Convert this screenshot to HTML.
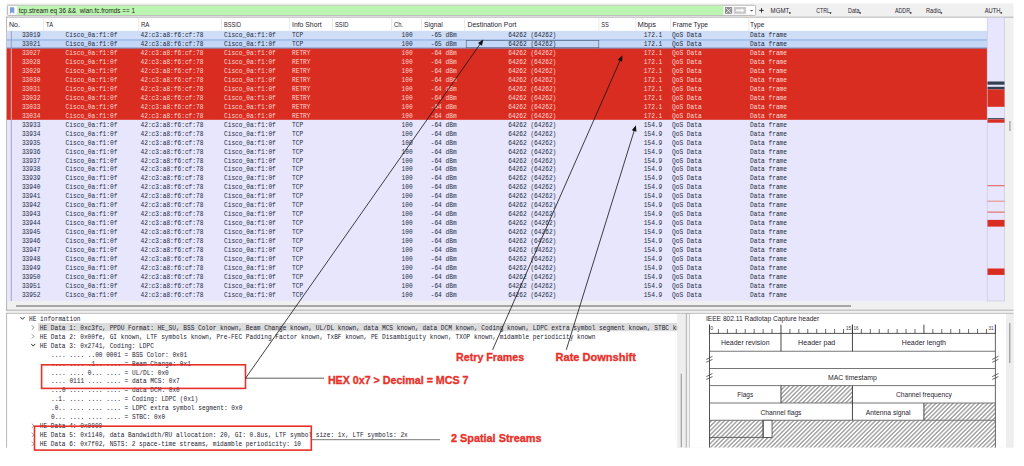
<!DOCTYPE html>
<html><head><meta charset="utf-8"><title>Wireshark HE capture</title>
<style>
html,body{margin:0;padding:0;background:#fff;}
body{width:1024px;height:466px;overflow:hidden;}
svg{display:block;}
.m{font-family:"Liberation Mono", monospace;}
.s{font-family:"Liberation Sans", sans-serif;}
</style></head><body>
<svg width="1024" height="466" viewBox="0 0 1024 466">
<rect x="0.00" y="0.00" width="1024.00" height="466.00" fill="#ffffff"/>
<rect x="6.00" y="3.50" width="1007.50" height="444.10" fill="#f0f0f0"/>
<rect x="7.60" y="5.30" width="748.00" height="10.10" fill="#ffffff" stroke="#a8a8a8" stroke-width="0.8" rx="1"/>
<path d="M9.9 7.2 H14.3 V13.8 L12.1 12.2 L9.9 13.8 Z" fill="#7f9fd6"/>
<rect x="17.30" y="5.60" width="706.20" height="9.40" fill="#bcf5b2"/>
<text x="18.70" y="13.30" class="s" font-size="6.9" fill="#1c2414" textLength="116.3" lengthAdjust="spacingAndGlyphs" xml:space="preserve">tcp.stream eq 36 &amp;&amp;  wlan.fc.fromds == 1</text>
<rect x="725.00" y="7.00" width="7.20" height="6.80" fill="#8e8e8e"/>
<path d="M726.2 8.2 L731 13 M731 8.2 L726.2 13" stroke="#ffffff" stroke-width="0.7"/>
<rect x="733.80" y="7.00" width="12.20" height="6.80" fill="#c8c8c8"/>
<path d="M736 9.6 H741.5 V8.2 L744.2 10.4 L741.5 12.6 V11.2 H736 Z" fill="#ffffff"/>
<path d="M749.8 9.9 H753.4 L751.6 11.6 Z" fill="#555"/>
<path d="M759.2 10.4 H763.8 M761.5 8.1 V12.7" stroke="#222" stroke-width="0.9"/>
<text x="770.60" y="12.90" class="s" font-size="6.6" fill="#2a2530" textLength="18.6" lengthAdjust="spacingAndGlyphs">MGMT</text>
<path d="M788.80 12.00 L791.00 12.60 L789.80 14.20 Z" fill="#222"/>
<text x="816.20" y="12.90" class="s" font-size="6.6" fill="#2a2530" textLength="13.6" lengthAdjust="spacingAndGlyphs">CTRL</text>
<path d="M829.40 12.00 L831.60 12.60 L830.40 14.20 Z" fill="#222"/>
<text x="848.00" y="12.90" class="s" font-size="6.6" fill="#2a2530" textLength="11.4" lengthAdjust="spacingAndGlyphs">Data</text>
<path d="M859.00 12.00 L861.20 12.60 L860.00 14.20 Z" fill="#222"/>
<text x="894.90" y="12.90" class="s" font-size="6.6" fill="#2a2530" textLength="15.2" lengthAdjust="spacingAndGlyphs">ADDR</text>
<path d="M909.70 12.00 L911.90 12.60 L910.70 14.20 Z" fill="#222"/>
<text x="926.00" y="12.90" class="s" font-size="6.6" fill="#2a2530" textLength="14.6" lengthAdjust="spacingAndGlyphs">Radio</text>
<path d="M940.20 12.00 L942.40 12.60 L941.20 14.20 Z" fill="#222"/>
<text x="984.75" y="12.90" class="s" font-size="6.6" fill="#2a2530" textLength="15.8" lengthAdjust="spacingAndGlyphs">AUTH</text>
<path d="M1000.15 12.00 L1002.35 12.60 L1001.15 14.20 Z" fill="#222"/>
<rect x="6.20" y="17.00" width="981.20" height="14.00" fill="#ffffff"/>
<line x1="6.00" y1="17.20" x2="1013.50" y2="17.20" stroke="#a3a3a3" stroke-width="0.8"/>
<line x1="6.60" y1="17.20" x2="6.60" y2="310.20" stroke="#a3a3a3" stroke-width="0.8"/>
<line x1="43.50" y1="17.60" x2="43.50" y2="30.80" stroke="#e6e6e6" stroke-width="0.8"/>
<line x1="138.60" y1="17.60" x2="138.60" y2="30.80" stroke="#e6e6e6" stroke-width="0.8"/>
<line x1="221.50" y1="17.60" x2="221.50" y2="30.80" stroke="#e6e6e6" stroke-width="0.8"/>
<line x1="289.50" y1="17.60" x2="289.50" y2="30.80" stroke="#e6e6e6" stroke-width="0.8"/>
<line x1="332.50" y1="17.60" x2="332.50" y2="30.80" stroke="#e6e6e6" stroke-width="0.8"/>
<line x1="391.50" y1="17.60" x2="391.50" y2="30.80" stroke="#e6e6e6" stroke-width="0.8"/>
<line x1="421.50" y1="17.60" x2="421.50" y2="30.80" stroke="#e6e6e6" stroke-width="0.8"/>
<line x1="464.60" y1="17.60" x2="464.60" y2="30.80" stroke="#e6e6e6" stroke-width="0.8"/>
<line x1="598.90" y1="17.60" x2="598.90" y2="30.80" stroke="#e6e6e6" stroke-width="0.8"/>
<line x1="635.75" y1="17.60" x2="635.75" y2="30.80" stroke="#e6e6e6" stroke-width="0.8"/>
<line x1="670.60" y1="17.60" x2="670.60" y2="30.80" stroke="#e6e6e6" stroke-width="0.8"/>
<line x1="748.75" y1="17.60" x2="748.75" y2="30.80" stroke="#e6e6e6" stroke-width="0.8"/>
<text x="8.90" y="27.30" class="s" font-size="7.5" fill="#2b2530" textLength="11.0" lengthAdjust="spacingAndGlyphs">No.</text>
<text x="46.10" y="27.30" class="s" font-size="7.5" fill="#2b2530" textLength="6.9" lengthAdjust="spacingAndGlyphs">TA</text>
<text x="141.00" y="27.30" class="s" font-size="7.5" fill="#2b2530" textLength="8.4" lengthAdjust="spacingAndGlyphs">RA</text>
<text x="224.10" y="27.30" class="s" font-size="7.5" fill="#2b2530" textLength="16.9" lengthAdjust="spacingAndGlyphs">BSSID</text>
<text x="292.00" y="27.30" class="s" font-size="7.5" fill="#2b2530" textLength="29.6" lengthAdjust="spacingAndGlyphs">Info Short</text>
<text x="334.90" y="27.30" class="s" font-size="7.5" fill="#2b2530" textLength="13.6" lengthAdjust="spacingAndGlyphs">SSID</text>
<text x="394.00" y="27.30" class="s" font-size="7.5" fill="#2b2530" textLength="9.2" lengthAdjust="spacingAndGlyphs">Ch.</text>
<text x="424.10" y="27.30" class="s" font-size="7.5" fill="#2b2530" textLength="18.6" lengthAdjust="spacingAndGlyphs">Signal</text>
<text x="467.60" y="27.30" class="s" font-size="7.5" fill="#2b2530" textLength="48.8" lengthAdjust="spacingAndGlyphs">Destination Port</text>
<text x="601.30" y="27.30" class="s" font-size="7.5" fill="#2b2530" textLength="7.6" lengthAdjust="spacingAndGlyphs">SS</text>
<text x="637.60" y="27.30" class="s" font-size="7.5" fill="#2b2530" textLength="18.5" lengthAdjust="spacingAndGlyphs">Mbps</text>
<text x="672.60" y="27.30" class="s" font-size="7.5" fill="#2b2530" textLength="35.5" lengthAdjust="spacingAndGlyphs">Frame Type</text>
<text x="750.10" y="27.30" class="s" font-size="7.5" fill="#2b2530" textLength="14.2" lengthAdjust="spacingAndGlyphs">Type</text>
<clipPath id="plc"><rect x="6.6" y="30.4" width="980.6" height="270.7"/></clipPath>
<g clip-path="url(#plc)">
<rect x="6.60" y="30.40" width="980.60" height="270.40" fill="#e7e6fd"/>
<rect x="6.60" y="30.90" width="980.60" height="8.80" fill="#d0ddf7"/>
<rect x="6.60" y="39.60" width="980.60" height="8.90" fill="#c4d7f6"/>
<rect x="6.60" y="48.40" width="980.60" height="71.40" fill="#d92d21"/>
<line x1="6.60" y1="39.95" x2="987.20" y2="39.95" stroke="#7ea6e2" stroke-width="0.9"/>
<line x1="6.60" y1="48.10" x2="987.20" y2="48.10" stroke="#5f6ca0" stroke-width="0.8"/>
<rect x="466.2" y="40.3" width="132.6" height="7.5" fill="none" stroke="#4a5a70" stroke-width="0.6"/>
<text x="21.90" y="37.35" class="m" font-size="7.1" fill="#202a3c" stroke="#202a3c" stroke-width="0" textLength="18.50" lengthAdjust="spacingAndGlyphs" xml:space="preserve">33019</text>
<text x="65.60" y="37.35" class="m" font-size="7.1" fill="#202a3c" stroke="#202a3c" stroke-width="0" textLength="51.80" lengthAdjust="spacingAndGlyphs" xml:space="preserve">Cisco_0a:f1:0f</text>
<text x="140.50" y="37.35" class="m" font-size="7.1" fill="#202a3c" stroke="#202a3c" stroke-width="0" textLength="62.90" lengthAdjust="spacingAndGlyphs" xml:space="preserve">42:c3:a8:f6:cf:78</text>
<text x="224.00" y="37.35" class="m" font-size="7.1" fill="#202a3c" stroke="#202a3c" stroke-width="0" textLength="51.80" lengthAdjust="spacingAndGlyphs" xml:space="preserve">Cisco_0a:f1:0f</text>
<text x="292.00" y="37.35" class="m" font-size="7.1" fill="#202a3c" stroke="#202a3c" stroke-width="0" textLength="11.10" lengthAdjust="spacingAndGlyphs" xml:space="preserve">TCP</text>
<text x="401.50" y="37.35" class="m" font-size="7.1" fill="#202a3c" stroke="#202a3c" stroke-width="0" textLength="11.10" lengthAdjust="spacingAndGlyphs" xml:space="preserve">100</text>
<text x="430.70" y="37.35" class="m" font-size="7.1" fill="#202a3c" stroke="#202a3c" stroke-width="0" textLength="25.90" lengthAdjust="spacingAndGlyphs" xml:space="preserve">-65 dBm</text>
<text x="508.20" y="37.35" class="m" font-size="7.1" fill="#202a3c" stroke="#202a3c" stroke-width="0" textLength="48.10" lengthAdjust="spacingAndGlyphs" xml:space="preserve">64262 (64262)</text>
<text x="643.75" y="37.35" class="m" font-size="7.1" fill="#202a3c" stroke="#202a3c" stroke-width="0" textLength="18.50" lengthAdjust="spacingAndGlyphs" xml:space="preserve">172.1</text>
<text x="672.00" y="37.35" class="m" font-size="7.1" fill="#202a3c" stroke="#202a3c" stroke-width="0" textLength="29.60" lengthAdjust="spacingAndGlyphs" xml:space="preserve">QoS Data</text>
<text x="750.00" y="37.35" class="m" font-size="7.1" fill="#202a3c" stroke="#202a3c" stroke-width="0" textLength="37.00" lengthAdjust="spacingAndGlyphs" xml:space="preserve">Data frame</text>
<text x="21.90" y="46.29" class="m" font-size="7.1" fill="#202a3c" stroke="#202a3c" stroke-width="0" textLength="18.50" lengthAdjust="spacingAndGlyphs" xml:space="preserve">33021</text>
<text x="65.60" y="46.29" class="m" font-size="7.1" fill="#202a3c" stroke="#202a3c" stroke-width="0" textLength="51.80" lengthAdjust="spacingAndGlyphs" xml:space="preserve">Cisco_0a:f1:0f</text>
<text x="140.50" y="46.29" class="m" font-size="7.1" fill="#202a3c" stroke="#202a3c" stroke-width="0" textLength="62.90" lengthAdjust="spacingAndGlyphs" xml:space="preserve">42:c3:a8:f6:cf:78</text>
<text x="224.00" y="46.29" class="m" font-size="7.1" fill="#202a3c" stroke="#202a3c" stroke-width="0" textLength="51.80" lengthAdjust="spacingAndGlyphs" xml:space="preserve">Cisco_0a:f1:0f</text>
<text x="292.00" y="46.29" class="m" font-size="7.1" fill="#202a3c" stroke="#202a3c" stroke-width="0" textLength="11.10" lengthAdjust="spacingAndGlyphs" xml:space="preserve">TCP</text>
<text x="401.50" y="46.29" class="m" font-size="7.1" fill="#202a3c" stroke="#202a3c" stroke-width="0" textLength="11.10" lengthAdjust="spacingAndGlyphs" xml:space="preserve">100</text>
<text x="430.70" y="46.29" class="m" font-size="7.1" fill="#202a3c" stroke="#202a3c" stroke-width="0" textLength="25.90" lengthAdjust="spacingAndGlyphs" xml:space="preserve">-65 dBm</text>
<text x="508.20" y="46.29" class="m" font-size="7.1" fill="#202a3c" stroke="#202a3c" stroke-width="0" textLength="48.10" lengthAdjust="spacingAndGlyphs" xml:space="preserve">64262 (64262)</text>
<text x="643.75" y="46.29" class="m" font-size="7.1" fill="#202a3c" stroke="#202a3c" stroke-width="0" textLength="18.50" lengthAdjust="spacingAndGlyphs" xml:space="preserve">172.1</text>
<text x="672.00" y="46.29" class="m" font-size="7.1" fill="#202a3c" stroke="#202a3c" stroke-width="0" textLength="29.60" lengthAdjust="spacingAndGlyphs" xml:space="preserve">QoS Data</text>
<text x="750.00" y="46.29" class="m" font-size="7.1" fill="#202a3c" stroke="#202a3c" stroke-width="0" textLength="37.00" lengthAdjust="spacingAndGlyphs" xml:space="preserve">Data frame</text>
<text x="21.90" y="55.23" class="m" font-size="7.1" fill="#fcd6d0" stroke="#fcd6d0" stroke-width="0" textLength="18.50" lengthAdjust="spacingAndGlyphs" xml:space="preserve">33027</text>
<text x="65.60" y="55.23" class="m" font-size="7.1" fill="#fcd6d0" stroke="#fcd6d0" stroke-width="0" textLength="51.80" lengthAdjust="spacingAndGlyphs" xml:space="preserve">Cisco_0a:f1:0f</text>
<text x="140.50" y="55.23" class="m" font-size="7.1" fill="#fcd6d0" stroke="#fcd6d0" stroke-width="0" textLength="62.90" lengthAdjust="spacingAndGlyphs" xml:space="preserve">42:c3:a8:f6:cf:78</text>
<text x="224.00" y="55.23" class="m" font-size="7.1" fill="#fcd6d0" stroke="#fcd6d0" stroke-width="0" textLength="51.80" lengthAdjust="spacingAndGlyphs" xml:space="preserve">Cisco_0a:f1:0f</text>
<text x="292.00" y="55.23" class="m" font-size="7.1" fill="#fcd6d0" stroke="#fcd6d0" stroke-width="0" textLength="18.50" lengthAdjust="spacingAndGlyphs" xml:space="preserve">RETRY</text>
<text x="401.50" y="55.23" class="m" font-size="7.1" fill="#fcd6d0" stroke="#fcd6d0" stroke-width="0" textLength="11.10" lengthAdjust="spacingAndGlyphs" xml:space="preserve">100</text>
<text x="430.70" y="55.23" class="m" font-size="7.1" fill="#fcd6d0" stroke="#fcd6d0" stroke-width="0" textLength="25.90" lengthAdjust="spacingAndGlyphs" xml:space="preserve">-64 dBm</text>
<text x="508.20" y="55.23" class="m" font-size="7.1" fill="#fcd6d0" stroke="#fcd6d0" stroke-width="0" textLength="48.10" lengthAdjust="spacingAndGlyphs" xml:space="preserve">64262 (64262)</text>
<text x="643.75" y="55.23" class="m" font-size="7.1" fill="#fcd6d0" stroke="#fcd6d0" stroke-width="0" textLength="18.50" lengthAdjust="spacingAndGlyphs" xml:space="preserve">172.1</text>
<text x="672.00" y="55.23" class="m" font-size="7.1" fill="#fcd6d0" stroke="#fcd6d0" stroke-width="0" textLength="29.60" lengthAdjust="spacingAndGlyphs" xml:space="preserve">QoS Data</text>
<text x="750.00" y="55.23" class="m" font-size="7.1" fill="#fcd6d0" stroke="#fcd6d0" stroke-width="0" textLength="37.00" lengthAdjust="spacingAndGlyphs" xml:space="preserve">Data frame</text>
<text x="21.90" y="64.17" class="m" font-size="7.1" fill="#fcd6d0" stroke="#fcd6d0" stroke-width="0" textLength="18.50" lengthAdjust="spacingAndGlyphs" xml:space="preserve">33028</text>
<text x="65.60" y="64.17" class="m" font-size="7.1" fill="#fcd6d0" stroke="#fcd6d0" stroke-width="0" textLength="51.80" lengthAdjust="spacingAndGlyphs" xml:space="preserve">Cisco_0a:f1:0f</text>
<text x="140.50" y="64.17" class="m" font-size="7.1" fill="#fcd6d0" stroke="#fcd6d0" stroke-width="0" textLength="62.90" lengthAdjust="spacingAndGlyphs" xml:space="preserve">42:c3:a8:f6:cf:78</text>
<text x="224.00" y="64.17" class="m" font-size="7.1" fill="#fcd6d0" stroke="#fcd6d0" stroke-width="0" textLength="51.80" lengthAdjust="spacingAndGlyphs" xml:space="preserve">Cisco_0a:f1:0f</text>
<text x="292.00" y="64.17" class="m" font-size="7.1" fill="#fcd6d0" stroke="#fcd6d0" stroke-width="0" textLength="18.50" lengthAdjust="spacingAndGlyphs" xml:space="preserve">RETRY</text>
<text x="401.50" y="64.17" class="m" font-size="7.1" fill="#fcd6d0" stroke="#fcd6d0" stroke-width="0" textLength="11.10" lengthAdjust="spacingAndGlyphs" xml:space="preserve">100</text>
<text x="430.70" y="64.17" class="m" font-size="7.1" fill="#fcd6d0" stroke="#fcd6d0" stroke-width="0" textLength="25.90" lengthAdjust="spacingAndGlyphs" xml:space="preserve">-64 dBm</text>
<text x="508.20" y="64.17" class="m" font-size="7.1" fill="#fcd6d0" stroke="#fcd6d0" stroke-width="0" textLength="48.10" lengthAdjust="spacingAndGlyphs" xml:space="preserve">64262 (64262)</text>
<text x="643.75" y="64.17" class="m" font-size="7.1" fill="#fcd6d0" stroke="#fcd6d0" stroke-width="0" textLength="18.50" lengthAdjust="spacingAndGlyphs" xml:space="preserve">172.1</text>
<text x="672.00" y="64.17" class="m" font-size="7.1" fill="#fcd6d0" stroke="#fcd6d0" stroke-width="0" textLength="29.60" lengthAdjust="spacingAndGlyphs" xml:space="preserve">QoS Data</text>
<text x="750.00" y="64.17" class="m" font-size="7.1" fill="#fcd6d0" stroke="#fcd6d0" stroke-width="0" textLength="37.00" lengthAdjust="spacingAndGlyphs" xml:space="preserve">Data frame</text>
<text x="21.90" y="73.11" class="m" font-size="7.1" fill="#fcd6d0" stroke="#fcd6d0" stroke-width="0" textLength="18.50" lengthAdjust="spacingAndGlyphs" xml:space="preserve">33029</text>
<text x="65.60" y="73.11" class="m" font-size="7.1" fill="#fcd6d0" stroke="#fcd6d0" stroke-width="0" textLength="51.80" lengthAdjust="spacingAndGlyphs" xml:space="preserve">Cisco_0a:f1:0f</text>
<text x="140.50" y="73.11" class="m" font-size="7.1" fill="#fcd6d0" stroke="#fcd6d0" stroke-width="0" textLength="62.90" lengthAdjust="spacingAndGlyphs" xml:space="preserve">42:c3:a8:f6:cf:78</text>
<text x="224.00" y="73.11" class="m" font-size="7.1" fill="#fcd6d0" stroke="#fcd6d0" stroke-width="0" textLength="51.80" lengthAdjust="spacingAndGlyphs" xml:space="preserve">Cisco_0a:f1:0f</text>
<text x="292.00" y="73.11" class="m" font-size="7.1" fill="#fcd6d0" stroke="#fcd6d0" stroke-width="0" textLength="18.50" lengthAdjust="spacingAndGlyphs" xml:space="preserve">RETRY</text>
<text x="401.50" y="73.11" class="m" font-size="7.1" fill="#fcd6d0" stroke="#fcd6d0" stroke-width="0" textLength="11.10" lengthAdjust="spacingAndGlyphs" xml:space="preserve">100</text>
<text x="430.70" y="73.11" class="m" font-size="7.1" fill="#fcd6d0" stroke="#fcd6d0" stroke-width="0" textLength="25.90" lengthAdjust="spacingAndGlyphs" xml:space="preserve">-64 dBm</text>
<text x="508.20" y="73.11" class="m" font-size="7.1" fill="#fcd6d0" stroke="#fcd6d0" stroke-width="0" textLength="48.10" lengthAdjust="spacingAndGlyphs" xml:space="preserve">64262 (64262)</text>
<text x="643.75" y="73.11" class="m" font-size="7.1" fill="#fcd6d0" stroke="#fcd6d0" stroke-width="0" textLength="18.50" lengthAdjust="spacingAndGlyphs" xml:space="preserve">172.1</text>
<text x="672.00" y="73.11" class="m" font-size="7.1" fill="#fcd6d0" stroke="#fcd6d0" stroke-width="0" textLength="29.60" lengthAdjust="spacingAndGlyphs" xml:space="preserve">QoS Data</text>
<text x="750.00" y="73.11" class="m" font-size="7.1" fill="#fcd6d0" stroke="#fcd6d0" stroke-width="0" textLength="37.00" lengthAdjust="spacingAndGlyphs" xml:space="preserve">Data frame</text>
<text x="21.90" y="82.05" class="m" font-size="7.1" fill="#fcd6d0" stroke="#fcd6d0" stroke-width="0" textLength="18.50" lengthAdjust="spacingAndGlyphs" xml:space="preserve">33030</text>
<text x="65.60" y="82.05" class="m" font-size="7.1" fill="#fcd6d0" stroke="#fcd6d0" stroke-width="0" textLength="51.80" lengthAdjust="spacingAndGlyphs" xml:space="preserve">Cisco_0a:f1:0f</text>
<text x="140.50" y="82.05" class="m" font-size="7.1" fill="#fcd6d0" stroke="#fcd6d0" stroke-width="0" textLength="62.90" lengthAdjust="spacingAndGlyphs" xml:space="preserve">42:c3:a8:f6:cf:78</text>
<text x="224.00" y="82.05" class="m" font-size="7.1" fill="#fcd6d0" stroke="#fcd6d0" stroke-width="0" textLength="51.80" lengthAdjust="spacingAndGlyphs" xml:space="preserve">Cisco_0a:f1:0f</text>
<text x="292.00" y="82.05" class="m" font-size="7.1" fill="#fcd6d0" stroke="#fcd6d0" stroke-width="0" textLength="18.50" lengthAdjust="spacingAndGlyphs" xml:space="preserve">RETRY</text>
<text x="401.50" y="82.05" class="m" font-size="7.1" fill="#fcd6d0" stroke="#fcd6d0" stroke-width="0" textLength="11.10" lengthAdjust="spacingAndGlyphs" xml:space="preserve">100</text>
<text x="430.70" y="82.05" class="m" font-size="7.1" fill="#fcd6d0" stroke="#fcd6d0" stroke-width="0" textLength="25.90" lengthAdjust="spacingAndGlyphs" xml:space="preserve">-64 dBm</text>
<text x="508.20" y="82.05" class="m" font-size="7.1" fill="#fcd6d0" stroke="#fcd6d0" stroke-width="0" textLength="48.10" lengthAdjust="spacingAndGlyphs" xml:space="preserve">64262 (64262)</text>
<text x="643.75" y="82.05" class="m" font-size="7.1" fill="#fcd6d0" stroke="#fcd6d0" stroke-width="0" textLength="18.50" lengthAdjust="spacingAndGlyphs" xml:space="preserve">172.1</text>
<text x="672.00" y="82.05" class="m" font-size="7.1" fill="#fcd6d0" stroke="#fcd6d0" stroke-width="0" textLength="29.60" lengthAdjust="spacingAndGlyphs" xml:space="preserve">QoS Data</text>
<text x="750.00" y="82.05" class="m" font-size="7.1" fill="#fcd6d0" stroke="#fcd6d0" stroke-width="0" textLength="37.00" lengthAdjust="spacingAndGlyphs" xml:space="preserve">Data frame</text>
<text x="21.90" y="90.99" class="m" font-size="7.1" fill="#fcd6d0" stroke="#fcd6d0" stroke-width="0" textLength="18.50" lengthAdjust="spacingAndGlyphs" xml:space="preserve">33031</text>
<text x="65.60" y="90.99" class="m" font-size="7.1" fill="#fcd6d0" stroke="#fcd6d0" stroke-width="0" textLength="51.80" lengthAdjust="spacingAndGlyphs" xml:space="preserve">Cisco_0a:f1:0f</text>
<text x="140.50" y="90.99" class="m" font-size="7.1" fill="#fcd6d0" stroke="#fcd6d0" stroke-width="0" textLength="62.90" lengthAdjust="spacingAndGlyphs" xml:space="preserve">42:c3:a8:f6:cf:78</text>
<text x="224.00" y="90.99" class="m" font-size="7.1" fill="#fcd6d0" stroke="#fcd6d0" stroke-width="0" textLength="51.80" lengthAdjust="spacingAndGlyphs" xml:space="preserve">Cisco_0a:f1:0f</text>
<text x="292.00" y="90.99" class="m" font-size="7.1" fill="#fcd6d0" stroke="#fcd6d0" stroke-width="0" textLength="18.50" lengthAdjust="spacingAndGlyphs" xml:space="preserve">RETRY</text>
<text x="401.50" y="90.99" class="m" font-size="7.1" fill="#fcd6d0" stroke="#fcd6d0" stroke-width="0" textLength="11.10" lengthAdjust="spacingAndGlyphs" xml:space="preserve">100</text>
<text x="430.70" y="90.99" class="m" font-size="7.1" fill="#fcd6d0" stroke="#fcd6d0" stroke-width="0" textLength="25.90" lengthAdjust="spacingAndGlyphs" xml:space="preserve">-64 dBm</text>
<text x="508.20" y="90.99" class="m" font-size="7.1" fill="#fcd6d0" stroke="#fcd6d0" stroke-width="0" textLength="48.10" lengthAdjust="spacingAndGlyphs" xml:space="preserve">64262 (64262)</text>
<text x="643.75" y="90.99" class="m" font-size="7.1" fill="#fcd6d0" stroke="#fcd6d0" stroke-width="0" textLength="18.50" lengthAdjust="spacingAndGlyphs" xml:space="preserve">172.1</text>
<text x="672.00" y="90.99" class="m" font-size="7.1" fill="#fcd6d0" stroke="#fcd6d0" stroke-width="0" textLength="29.60" lengthAdjust="spacingAndGlyphs" xml:space="preserve">QoS Data</text>
<text x="750.00" y="90.99" class="m" font-size="7.1" fill="#fcd6d0" stroke="#fcd6d0" stroke-width="0" textLength="37.00" lengthAdjust="spacingAndGlyphs" xml:space="preserve">Data frame</text>
<text x="21.90" y="99.93" class="m" font-size="7.1" fill="#fcd6d0" stroke="#fcd6d0" stroke-width="0" textLength="18.50" lengthAdjust="spacingAndGlyphs" xml:space="preserve">33032</text>
<text x="65.60" y="99.93" class="m" font-size="7.1" fill="#fcd6d0" stroke="#fcd6d0" stroke-width="0" textLength="51.80" lengthAdjust="spacingAndGlyphs" xml:space="preserve">Cisco_0a:f1:0f</text>
<text x="140.50" y="99.93" class="m" font-size="7.1" fill="#fcd6d0" stroke="#fcd6d0" stroke-width="0" textLength="62.90" lengthAdjust="spacingAndGlyphs" xml:space="preserve">42:c3:a8:f6:cf:78</text>
<text x="224.00" y="99.93" class="m" font-size="7.1" fill="#fcd6d0" stroke="#fcd6d0" stroke-width="0" textLength="51.80" lengthAdjust="spacingAndGlyphs" xml:space="preserve">Cisco_0a:f1:0f</text>
<text x="292.00" y="99.93" class="m" font-size="7.1" fill="#fcd6d0" stroke="#fcd6d0" stroke-width="0" textLength="18.50" lengthAdjust="spacingAndGlyphs" xml:space="preserve">RETRY</text>
<text x="401.50" y="99.93" class="m" font-size="7.1" fill="#fcd6d0" stroke="#fcd6d0" stroke-width="0" textLength="11.10" lengthAdjust="spacingAndGlyphs" xml:space="preserve">100</text>
<text x="430.70" y="99.93" class="m" font-size="7.1" fill="#fcd6d0" stroke="#fcd6d0" stroke-width="0" textLength="25.90" lengthAdjust="spacingAndGlyphs" xml:space="preserve">-64 dBm</text>
<text x="508.20" y="99.93" class="m" font-size="7.1" fill="#fcd6d0" stroke="#fcd6d0" stroke-width="0" textLength="48.10" lengthAdjust="spacingAndGlyphs" xml:space="preserve">64262 (64262)</text>
<text x="643.75" y="99.93" class="m" font-size="7.1" fill="#fcd6d0" stroke="#fcd6d0" stroke-width="0" textLength="18.50" lengthAdjust="spacingAndGlyphs" xml:space="preserve">172.1</text>
<text x="672.00" y="99.93" class="m" font-size="7.1" fill="#fcd6d0" stroke="#fcd6d0" stroke-width="0" textLength="29.60" lengthAdjust="spacingAndGlyphs" xml:space="preserve">QoS Data</text>
<text x="750.00" y="99.93" class="m" font-size="7.1" fill="#fcd6d0" stroke="#fcd6d0" stroke-width="0" textLength="37.00" lengthAdjust="spacingAndGlyphs" xml:space="preserve">Data frame</text>
<text x="21.90" y="108.87" class="m" font-size="7.1" fill="#fcd6d0" stroke="#fcd6d0" stroke-width="0" textLength="18.50" lengthAdjust="spacingAndGlyphs" xml:space="preserve">33033</text>
<text x="65.60" y="108.87" class="m" font-size="7.1" fill="#fcd6d0" stroke="#fcd6d0" stroke-width="0" textLength="51.80" lengthAdjust="spacingAndGlyphs" xml:space="preserve">Cisco_0a:f1:0f</text>
<text x="140.50" y="108.87" class="m" font-size="7.1" fill="#fcd6d0" stroke="#fcd6d0" stroke-width="0" textLength="62.90" lengthAdjust="spacingAndGlyphs" xml:space="preserve">42:c3:a8:f6:cf:78</text>
<text x="224.00" y="108.87" class="m" font-size="7.1" fill="#fcd6d0" stroke="#fcd6d0" stroke-width="0" textLength="51.80" lengthAdjust="spacingAndGlyphs" xml:space="preserve">Cisco_0a:f1:0f</text>
<text x="292.00" y="108.87" class="m" font-size="7.1" fill="#fcd6d0" stroke="#fcd6d0" stroke-width="0" textLength="18.50" lengthAdjust="spacingAndGlyphs" xml:space="preserve">RETRY</text>
<text x="401.50" y="108.87" class="m" font-size="7.1" fill="#fcd6d0" stroke="#fcd6d0" stroke-width="0" textLength="11.10" lengthAdjust="spacingAndGlyphs" xml:space="preserve">100</text>
<text x="430.70" y="108.87" class="m" font-size="7.1" fill="#fcd6d0" stroke="#fcd6d0" stroke-width="0" textLength="25.90" lengthAdjust="spacingAndGlyphs" xml:space="preserve">-64 dBm</text>
<text x="508.20" y="108.87" class="m" font-size="7.1" fill="#fcd6d0" stroke="#fcd6d0" stroke-width="0" textLength="48.10" lengthAdjust="spacingAndGlyphs" xml:space="preserve">64262 (64262)</text>
<text x="643.75" y="108.87" class="m" font-size="7.1" fill="#fcd6d0" stroke="#fcd6d0" stroke-width="0" textLength="18.50" lengthAdjust="spacingAndGlyphs" xml:space="preserve">172.1</text>
<text x="672.00" y="108.87" class="m" font-size="7.1" fill="#fcd6d0" stroke="#fcd6d0" stroke-width="0" textLength="29.60" lengthAdjust="spacingAndGlyphs" xml:space="preserve">QoS Data</text>
<text x="750.00" y="108.87" class="m" font-size="7.1" fill="#fcd6d0" stroke="#fcd6d0" stroke-width="0" textLength="37.00" lengthAdjust="spacingAndGlyphs" xml:space="preserve">Data frame</text>
<text x="21.90" y="117.81" class="m" font-size="7.1" fill="#fcd6d0" stroke="#fcd6d0" stroke-width="0" textLength="18.50" lengthAdjust="spacingAndGlyphs" xml:space="preserve">33034</text>
<text x="65.60" y="117.81" class="m" font-size="7.1" fill="#fcd6d0" stroke="#fcd6d0" stroke-width="0" textLength="51.80" lengthAdjust="spacingAndGlyphs" xml:space="preserve">Cisco_0a:f1:0f</text>
<text x="140.50" y="117.81" class="m" font-size="7.1" fill="#fcd6d0" stroke="#fcd6d0" stroke-width="0" textLength="62.90" lengthAdjust="spacingAndGlyphs" xml:space="preserve">42:c3:a8:f6:cf:78</text>
<text x="224.00" y="117.81" class="m" font-size="7.1" fill="#fcd6d0" stroke="#fcd6d0" stroke-width="0" textLength="51.80" lengthAdjust="spacingAndGlyphs" xml:space="preserve">Cisco_0a:f1:0f</text>
<text x="292.00" y="117.81" class="m" font-size="7.1" fill="#fcd6d0" stroke="#fcd6d0" stroke-width="0" textLength="18.50" lengthAdjust="spacingAndGlyphs" xml:space="preserve">RETRY</text>
<text x="401.50" y="117.81" class="m" font-size="7.1" fill="#fcd6d0" stroke="#fcd6d0" stroke-width="0" textLength="11.10" lengthAdjust="spacingAndGlyphs" xml:space="preserve">100</text>
<text x="430.70" y="117.81" class="m" font-size="7.1" fill="#fcd6d0" stroke="#fcd6d0" stroke-width="0" textLength="25.90" lengthAdjust="spacingAndGlyphs" xml:space="preserve">-64 dBm</text>
<text x="508.20" y="117.81" class="m" font-size="7.1" fill="#fcd6d0" stroke="#fcd6d0" stroke-width="0" textLength="48.10" lengthAdjust="spacingAndGlyphs" xml:space="preserve">64262 (64262)</text>
<text x="643.75" y="117.81" class="m" font-size="7.1" fill="#fcd6d0" stroke="#fcd6d0" stroke-width="0" textLength="18.50" lengthAdjust="spacingAndGlyphs" xml:space="preserve">172.1</text>
<text x="672.00" y="117.81" class="m" font-size="7.1" fill="#fcd6d0" stroke="#fcd6d0" stroke-width="0" textLength="29.60" lengthAdjust="spacingAndGlyphs" xml:space="preserve">QoS Data</text>
<text x="750.00" y="117.81" class="m" font-size="7.1" fill="#fcd6d0" stroke="#fcd6d0" stroke-width="0" textLength="37.00" lengthAdjust="spacingAndGlyphs" xml:space="preserve">Data frame</text>
<text x="21.90" y="126.75" class="m" font-size="7.1" fill="#232c3e" stroke="#232c3e" stroke-width="0" textLength="18.50" lengthAdjust="spacingAndGlyphs" xml:space="preserve">33933</text>
<text x="65.60" y="126.75" class="m" font-size="7.1" fill="#232c3e" stroke="#232c3e" stroke-width="0" textLength="51.80" lengthAdjust="spacingAndGlyphs" xml:space="preserve">Cisco_0a:f1:0f</text>
<text x="140.50" y="126.75" class="m" font-size="7.1" fill="#232c3e" stroke="#232c3e" stroke-width="0" textLength="62.90" lengthAdjust="spacingAndGlyphs" xml:space="preserve">42:c3:a8:f6:cf:78</text>
<text x="224.00" y="126.75" class="m" font-size="7.1" fill="#232c3e" stroke="#232c3e" stroke-width="0" textLength="51.80" lengthAdjust="spacingAndGlyphs" xml:space="preserve">Cisco_0a:f1:0f</text>
<text x="292.00" y="126.75" class="m" font-size="7.1" fill="#232c3e" stroke="#232c3e" stroke-width="0" textLength="11.10" lengthAdjust="spacingAndGlyphs" xml:space="preserve">TCP</text>
<text x="401.50" y="126.75" class="m" font-size="7.1" fill="#232c3e" stroke="#232c3e" stroke-width="0" textLength="11.10" lengthAdjust="spacingAndGlyphs" xml:space="preserve">100</text>
<text x="430.70" y="126.75" class="m" font-size="7.1" fill="#232c3e" stroke="#232c3e" stroke-width="0" textLength="25.90" lengthAdjust="spacingAndGlyphs" xml:space="preserve">-64 dBm</text>
<text x="508.20" y="126.75" class="m" font-size="7.1" fill="#232c3e" stroke="#232c3e" stroke-width="0" textLength="48.10" lengthAdjust="spacingAndGlyphs" xml:space="preserve">64262 (64262)</text>
<text x="643.75" y="126.75" class="m" font-size="7.1" fill="#232c3e" stroke="#232c3e" stroke-width="0" textLength="18.50" lengthAdjust="spacingAndGlyphs" xml:space="preserve">154.9</text>
<text x="672.00" y="126.75" class="m" font-size="7.1" fill="#232c3e" stroke="#232c3e" stroke-width="0" textLength="29.60" lengthAdjust="spacingAndGlyphs" xml:space="preserve">QoS Data</text>
<text x="750.00" y="126.75" class="m" font-size="7.1" fill="#232c3e" stroke="#232c3e" stroke-width="0" textLength="37.00" lengthAdjust="spacingAndGlyphs" xml:space="preserve">Data frame</text>
<text x="21.90" y="135.69" class="m" font-size="7.1" fill="#232c3e" stroke="#232c3e" stroke-width="0" textLength="18.50" lengthAdjust="spacingAndGlyphs" xml:space="preserve">33934</text>
<text x="65.60" y="135.69" class="m" font-size="7.1" fill="#232c3e" stroke="#232c3e" stroke-width="0" textLength="51.80" lengthAdjust="spacingAndGlyphs" xml:space="preserve">Cisco_0a:f1:0f</text>
<text x="140.50" y="135.69" class="m" font-size="7.1" fill="#232c3e" stroke="#232c3e" stroke-width="0" textLength="62.90" lengthAdjust="spacingAndGlyphs" xml:space="preserve">42:c3:a8:f6:cf:78</text>
<text x="224.00" y="135.69" class="m" font-size="7.1" fill="#232c3e" stroke="#232c3e" stroke-width="0" textLength="51.80" lengthAdjust="spacingAndGlyphs" xml:space="preserve">Cisco_0a:f1:0f</text>
<text x="292.00" y="135.69" class="m" font-size="7.1" fill="#232c3e" stroke="#232c3e" stroke-width="0" textLength="11.10" lengthAdjust="spacingAndGlyphs" xml:space="preserve">TCP</text>
<text x="401.50" y="135.69" class="m" font-size="7.1" fill="#232c3e" stroke="#232c3e" stroke-width="0" textLength="11.10" lengthAdjust="spacingAndGlyphs" xml:space="preserve">100</text>
<text x="430.70" y="135.69" class="m" font-size="7.1" fill="#232c3e" stroke="#232c3e" stroke-width="0" textLength="25.90" lengthAdjust="spacingAndGlyphs" xml:space="preserve">-64 dBm</text>
<text x="508.20" y="135.69" class="m" font-size="7.1" fill="#232c3e" stroke="#232c3e" stroke-width="0" textLength="48.10" lengthAdjust="spacingAndGlyphs" xml:space="preserve">64262 (64262)</text>
<text x="643.75" y="135.69" class="m" font-size="7.1" fill="#232c3e" stroke="#232c3e" stroke-width="0" textLength="18.50" lengthAdjust="spacingAndGlyphs" xml:space="preserve">154.9</text>
<text x="672.00" y="135.69" class="m" font-size="7.1" fill="#232c3e" stroke="#232c3e" stroke-width="0" textLength="29.60" lengthAdjust="spacingAndGlyphs" xml:space="preserve">QoS Data</text>
<text x="750.00" y="135.69" class="m" font-size="7.1" fill="#232c3e" stroke="#232c3e" stroke-width="0" textLength="37.00" lengthAdjust="spacingAndGlyphs" xml:space="preserve">Data frame</text>
<text x="21.90" y="144.63" class="m" font-size="7.1" fill="#232c3e" stroke="#232c3e" stroke-width="0" textLength="18.50" lengthAdjust="spacingAndGlyphs" xml:space="preserve">33935</text>
<text x="65.60" y="144.63" class="m" font-size="7.1" fill="#232c3e" stroke="#232c3e" stroke-width="0" textLength="51.80" lengthAdjust="spacingAndGlyphs" xml:space="preserve">Cisco_0a:f1:0f</text>
<text x="140.50" y="144.63" class="m" font-size="7.1" fill="#232c3e" stroke="#232c3e" stroke-width="0" textLength="62.90" lengthAdjust="spacingAndGlyphs" xml:space="preserve">42:c3:a8:f6:cf:78</text>
<text x="224.00" y="144.63" class="m" font-size="7.1" fill="#232c3e" stroke="#232c3e" stroke-width="0" textLength="51.80" lengthAdjust="spacingAndGlyphs" xml:space="preserve">Cisco_0a:f1:0f</text>
<text x="292.00" y="144.63" class="m" font-size="7.1" fill="#232c3e" stroke="#232c3e" stroke-width="0" textLength="11.10" lengthAdjust="spacingAndGlyphs" xml:space="preserve">TCP</text>
<text x="401.50" y="144.63" class="m" font-size="7.1" fill="#232c3e" stroke="#232c3e" stroke-width="0" textLength="11.10" lengthAdjust="spacingAndGlyphs" xml:space="preserve">100</text>
<text x="430.70" y="144.63" class="m" font-size="7.1" fill="#232c3e" stroke="#232c3e" stroke-width="0" textLength="25.90" lengthAdjust="spacingAndGlyphs" xml:space="preserve">-64 dBm</text>
<text x="508.20" y="144.63" class="m" font-size="7.1" fill="#232c3e" stroke="#232c3e" stroke-width="0" textLength="48.10" lengthAdjust="spacingAndGlyphs" xml:space="preserve">64262 (64262)</text>
<text x="643.75" y="144.63" class="m" font-size="7.1" fill="#232c3e" stroke="#232c3e" stroke-width="0" textLength="18.50" lengthAdjust="spacingAndGlyphs" xml:space="preserve">154.9</text>
<text x="672.00" y="144.63" class="m" font-size="7.1" fill="#232c3e" stroke="#232c3e" stroke-width="0" textLength="29.60" lengthAdjust="spacingAndGlyphs" xml:space="preserve">QoS Data</text>
<text x="750.00" y="144.63" class="m" font-size="7.1" fill="#232c3e" stroke="#232c3e" stroke-width="0" textLength="37.00" lengthAdjust="spacingAndGlyphs" xml:space="preserve">Data frame</text>
<text x="21.90" y="153.57" class="m" font-size="7.1" fill="#232c3e" stroke="#232c3e" stroke-width="0" textLength="18.50" lengthAdjust="spacingAndGlyphs" xml:space="preserve">33936</text>
<text x="65.60" y="153.57" class="m" font-size="7.1" fill="#232c3e" stroke="#232c3e" stroke-width="0" textLength="51.80" lengthAdjust="spacingAndGlyphs" xml:space="preserve">Cisco_0a:f1:0f</text>
<text x="140.50" y="153.57" class="m" font-size="7.1" fill="#232c3e" stroke="#232c3e" stroke-width="0" textLength="62.90" lengthAdjust="spacingAndGlyphs" xml:space="preserve">42:c3:a8:f6:cf:78</text>
<text x="224.00" y="153.57" class="m" font-size="7.1" fill="#232c3e" stroke="#232c3e" stroke-width="0" textLength="51.80" lengthAdjust="spacingAndGlyphs" xml:space="preserve">Cisco_0a:f1:0f</text>
<text x="292.00" y="153.57" class="m" font-size="7.1" fill="#232c3e" stroke="#232c3e" stroke-width="0" textLength="11.10" lengthAdjust="spacingAndGlyphs" xml:space="preserve">TCP</text>
<text x="401.50" y="153.57" class="m" font-size="7.1" fill="#232c3e" stroke="#232c3e" stroke-width="0" textLength="11.10" lengthAdjust="spacingAndGlyphs" xml:space="preserve">100</text>
<text x="430.70" y="153.57" class="m" font-size="7.1" fill="#232c3e" stroke="#232c3e" stroke-width="0" textLength="25.90" lengthAdjust="spacingAndGlyphs" xml:space="preserve">-64 dBm</text>
<text x="508.20" y="153.57" class="m" font-size="7.1" fill="#232c3e" stroke="#232c3e" stroke-width="0" textLength="48.10" lengthAdjust="spacingAndGlyphs" xml:space="preserve">64262 (64262)</text>
<text x="643.75" y="153.57" class="m" font-size="7.1" fill="#232c3e" stroke="#232c3e" stroke-width="0" textLength="18.50" lengthAdjust="spacingAndGlyphs" xml:space="preserve">154.9</text>
<text x="672.00" y="153.57" class="m" font-size="7.1" fill="#232c3e" stroke="#232c3e" stroke-width="0" textLength="29.60" lengthAdjust="spacingAndGlyphs" xml:space="preserve">QoS Data</text>
<text x="750.00" y="153.57" class="m" font-size="7.1" fill="#232c3e" stroke="#232c3e" stroke-width="0" textLength="37.00" lengthAdjust="spacingAndGlyphs" xml:space="preserve">Data frame</text>
<text x="21.90" y="162.51" class="m" font-size="7.1" fill="#232c3e" stroke="#232c3e" stroke-width="0" textLength="18.50" lengthAdjust="spacingAndGlyphs" xml:space="preserve">33937</text>
<text x="65.60" y="162.51" class="m" font-size="7.1" fill="#232c3e" stroke="#232c3e" stroke-width="0" textLength="51.80" lengthAdjust="spacingAndGlyphs" xml:space="preserve">Cisco_0a:f1:0f</text>
<text x="140.50" y="162.51" class="m" font-size="7.1" fill="#232c3e" stroke="#232c3e" stroke-width="0" textLength="62.90" lengthAdjust="spacingAndGlyphs" xml:space="preserve">42:c3:a8:f6:cf:78</text>
<text x="224.00" y="162.51" class="m" font-size="7.1" fill="#232c3e" stroke="#232c3e" stroke-width="0" textLength="51.80" lengthAdjust="spacingAndGlyphs" xml:space="preserve">Cisco_0a:f1:0f</text>
<text x="292.00" y="162.51" class="m" font-size="7.1" fill="#232c3e" stroke="#232c3e" stroke-width="0" textLength="11.10" lengthAdjust="spacingAndGlyphs" xml:space="preserve">TCP</text>
<text x="401.50" y="162.51" class="m" font-size="7.1" fill="#232c3e" stroke="#232c3e" stroke-width="0" textLength="11.10" lengthAdjust="spacingAndGlyphs" xml:space="preserve">100</text>
<text x="430.70" y="162.51" class="m" font-size="7.1" fill="#232c3e" stroke="#232c3e" stroke-width="0" textLength="25.90" lengthAdjust="spacingAndGlyphs" xml:space="preserve">-64 dBm</text>
<text x="508.20" y="162.51" class="m" font-size="7.1" fill="#232c3e" stroke="#232c3e" stroke-width="0" textLength="48.10" lengthAdjust="spacingAndGlyphs" xml:space="preserve">64262 (64262)</text>
<text x="643.75" y="162.51" class="m" font-size="7.1" fill="#232c3e" stroke="#232c3e" stroke-width="0" textLength="18.50" lengthAdjust="spacingAndGlyphs" xml:space="preserve">154.9</text>
<text x="672.00" y="162.51" class="m" font-size="7.1" fill="#232c3e" stroke="#232c3e" stroke-width="0" textLength="29.60" lengthAdjust="spacingAndGlyphs" xml:space="preserve">QoS Data</text>
<text x="750.00" y="162.51" class="m" font-size="7.1" fill="#232c3e" stroke="#232c3e" stroke-width="0" textLength="37.00" lengthAdjust="spacingAndGlyphs" xml:space="preserve">Data frame</text>
<text x="21.90" y="171.45" class="m" font-size="7.1" fill="#232c3e" stroke="#232c3e" stroke-width="0" textLength="18.50" lengthAdjust="spacingAndGlyphs" xml:space="preserve">33938</text>
<text x="65.60" y="171.45" class="m" font-size="7.1" fill="#232c3e" stroke="#232c3e" stroke-width="0" textLength="51.80" lengthAdjust="spacingAndGlyphs" xml:space="preserve">Cisco_0a:f1:0f</text>
<text x="140.50" y="171.45" class="m" font-size="7.1" fill="#232c3e" stroke="#232c3e" stroke-width="0" textLength="62.90" lengthAdjust="spacingAndGlyphs" xml:space="preserve">42:c3:a8:f6:cf:78</text>
<text x="224.00" y="171.45" class="m" font-size="7.1" fill="#232c3e" stroke="#232c3e" stroke-width="0" textLength="51.80" lengthAdjust="spacingAndGlyphs" xml:space="preserve">Cisco_0a:f1:0f</text>
<text x="292.00" y="171.45" class="m" font-size="7.1" fill="#232c3e" stroke="#232c3e" stroke-width="0" textLength="11.10" lengthAdjust="spacingAndGlyphs" xml:space="preserve">TCP</text>
<text x="401.50" y="171.45" class="m" font-size="7.1" fill="#232c3e" stroke="#232c3e" stroke-width="0" textLength="11.10" lengthAdjust="spacingAndGlyphs" xml:space="preserve">100</text>
<text x="430.70" y="171.45" class="m" font-size="7.1" fill="#232c3e" stroke="#232c3e" stroke-width="0" textLength="25.90" lengthAdjust="spacingAndGlyphs" xml:space="preserve">-64 dBm</text>
<text x="508.20" y="171.45" class="m" font-size="7.1" fill="#232c3e" stroke="#232c3e" stroke-width="0" textLength="48.10" lengthAdjust="spacingAndGlyphs" xml:space="preserve">64262 (64262)</text>
<text x="643.75" y="171.45" class="m" font-size="7.1" fill="#232c3e" stroke="#232c3e" stroke-width="0" textLength="18.50" lengthAdjust="spacingAndGlyphs" xml:space="preserve">154.9</text>
<text x="672.00" y="171.45" class="m" font-size="7.1" fill="#232c3e" stroke="#232c3e" stroke-width="0" textLength="29.60" lengthAdjust="spacingAndGlyphs" xml:space="preserve">QoS Data</text>
<text x="750.00" y="171.45" class="m" font-size="7.1" fill="#232c3e" stroke="#232c3e" stroke-width="0" textLength="37.00" lengthAdjust="spacingAndGlyphs" xml:space="preserve">Data frame</text>
<text x="21.90" y="180.39" class="m" font-size="7.1" fill="#232c3e" stroke="#232c3e" stroke-width="0" textLength="18.50" lengthAdjust="spacingAndGlyphs" xml:space="preserve">33939</text>
<text x="65.60" y="180.39" class="m" font-size="7.1" fill="#232c3e" stroke="#232c3e" stroke-width="0" textLength="51.80" lengthAdjust="spacingAndGlyphs" xml:space="preserve">Cisco_0a:f1:0f</text>
<text x="140.50" y="180.39" class="m" font-size="7.1" fill="#232c3e" stroke="#232c3e" stroke-width="0" textLength="62.90" lengthAdjust="spacingAndGlyphs" xml:space="preserve">42:c3:a8:f6:cf:78</text>
<text x="224.00" y="180.39" class="m" font-size="7.1" fill="#232c3e" stroke="#232c3e" stroke-width="0" textLength="51.80" lengthAdjust="spacingAndGlyphs" xml:space="preserve">Cisco_0a:f1:0f</text>
<text x="292.00" y="180.39" class="m" font-size="7.1" fill="#232c3e" stroke="#232c3e" stroke-width="0" textLength="11.10" lengthAdjust="spacingAndGlyphs" xml:space="preserve">TCP</text>
<text x="401.50" y="180.39" class="m" font-size="7.1" fill="#232c3e" stroke="#232c3e" stroke-width="0" textLength="11.10" lengthAdjust="spacingAndGlyphs" xml:space="preserve">100</text>
<text x="430.70" y="180.39" class="m" font-size="7.1" fill="#232c3e" stroke="#232c3e" stroke-width="0" textLength="25.90" lengthAdjust="spacingAndGlyphs" xml:space="preserve">-64 dBm</text>
<text x="508.20" y="180.39" class="m" font-size="7.1" fill="#232c3e" stroke="#232c3e" stroke-width="0" textLength="48.10" lengthAdjust="spacingAndGlyphs" xml:space="preserve">64262 (64262)</text>
<text x="643.75" y="180.39" class="m" font-size="7.1" fill="#232c3e" stroke="#232c3e" stroke-width="0" textLength="18.50" lengthAdjust="spacingAndGlyphs" xml:space="preserve">154.9</text>
<text x="672.00" y="180.39" class="m" font-size="7.1" fill="#232c3e" stroke="#232c3e" stroke-width="0" textLength="29.60" lengthAdjust="spacingAndGlyphs" xml:space="preserve">QoS Data</text>
<text x="750.00" y="180.39" class="m" font-size="7.1" fill="#232c3e" stroke="#232c3e" stroke-width="0" textLength="37.00" lengthAdjust="spacingAndGlyphs" xml:space="preserve">Data frame</text>
<text x="21.90" y="189.33" class="m" font-size="7.1" fill="#232c3e" stroke="#232c3e" stroke-width="0" textLength="18.50" lengthAdjust="spacingAndGlyphs" xml:space="preserve">33940</text>
<text x="65.60" y="189.33" class="m" font-size="7.1" fill="#232c3e" stroke="#232c3e" stroke-width="0" textLength="51.80" lengthAdjust="spacingAndGlyphs" xml:space="preserve">Cisco_0a:f1:0f</text>
<text x="140.50" y="189.33" class="m" font-size="7.1" fill="#232c3e" stroke="#232c3e" stroke-width="0" textLength="62.90" lengthAdjust="spacingAndGlyphs" xml:space="preserve">42:c3:a8:f6:cf:78</text>
<text x="224.00" y="189.33" class="m" font-size="7.1" fill="#232c3e" stroke="#232c3e" stroke-width="0" textLength="51.80" lengthAdjust="spacingAndGlyphs" xml:space="preserve">Cisco_0a:f1:0f</text>
<text x="292.00" y="189.33" class="m" font-size="7.1" fill="#232c3e" stroke="#232c3e" stroke-width="0" textLength="11.10" lengthAdjust="spacingAndGlyphs" xml:space="preserve">TCP</text>
<text x="401.50" y="189.33" class="m" font-size="7.1" fill="#232c3e" stroke="#232c3e" stroke-width="0" textLength="11.10" lengthAdjust="spacingAndGlyphs" xml:space="preserve">100</text>
<text x="430.70" y="189.33" class="m" font-size="7.1" fill="#232c3e" stroke="#232c3e" stroke-width="0" textLength="25.90" lengthAdjust="spacingAndGlyphs" xml:space="preserve">-64 dBm</text>
<text x="508.20" y="189.33" class="m" font-size="7.1" fill="#232c3e" stroke="#232c3e" stroke-width="0" textLength="48.10" lengthAdjust="spacingAndGlyphs" xml:space="preserve">64262 (64262)</text>
<text x="643.75" y="189.33" class="m" font-size="7.1" fill="#232c3e" stroke="#232c3e" stroke-width="0" textLength="18.50" lengthAdjust="spacingAndGlyphs" xml:space="preserve">154.9</text>
<text x="672.00" y="189.33" class="m" font-size="7.1" fill="#232c3e" stroke="#232c3e" stroke-width="0" textLength="29.60" lengthAdjust="spacingAndGlyphs" xml:space="preserve">QoS Data</text>
<text x="750.00" y="189.33" class="m" font-size="7.1" fill="#232c3e" stroke="#232c3e" stroke-width="0" textLength="37.00" lengthAdjust="spacingAndGlyphs" xml:space="preserve">Data frame</text>
<text x="21.90" y="198.27" class="m" font-size="7.1" fill="#232c3e" stroke="#232c3e" stroke-width="0" textLength="18.50" lengthAdjust="spacingAndGlyphs" xml:space="preserve">33941</text>
<text x="65.60" y="198.27" class="m" font-size="7.1" fill="#232c3e" stroke="#232c3e" stroke-width="0" textLength="51.80" lengthAdjust="spacingAndGlyphs" xml:space="preserve">Cisco_0a:f1:0f</text>
<text x="140.50" y="198.27" class="m" font-size="7.1" fill="#232c3e" stroke="#232c3e" stroke-width="0" textLength="62.90" lengthAdjust="spacingAndGlyphs" xml:space="preserve">42:c3:a8:f6:cf:78</text>
<text x="224.00" y="198.27" class="m" font-size="7.1" fill="#232c3e" stroke="#232c3e" stroke-width="0" textLength="51.80" lengthAdjust="spacingAndGlyphs" xml:space="preserve">Cisco_0a:f1:0f</text>
<text x="292.00" y="198.27" class="m" font-size="7.1" fill="#232c3e" stroke="#232c3e" stroke-width="0" textLength="11.10" lengthAdjust="spacingAndGlyphs" xml:space="preserve">TCP</text>
<text x="401.50" y="198.27" class="m" font-size="7.1" fill="#232c3e" stroke="#232c3e" stroke-width="0" textLength="11.10" lengthAdjust="spacingAndGlyphs" xml:space="preserve">100</text>
<text x="430.70" y="198.27" class="m" font-size="7.1" fill="#232c3e" stroke="#232c3e" stroke-width="0" textLength="25.90" lengthAdjust="spacingAndGlyphs" xml:space="preserve">-64 dBm</text>
<text x="508.20" y="198.27" class="m" font-size="7.1" fill="#232c3e" stroke="#232c3e" stroke-width="0" textLength="48.10" lengthAdjust="spacingAndGlyphs" xml:space="preserve">64262 (64262)</text>
<text x="643.75" y="198.27" class="m" font-size="7.1" fill="#232c3e" stroke="#232c3e" stroke-width="0" textLength="18.50" lengthAdjust="spacingAndGlyphs" xml:space="preserve">154.9</text>
<text x="672.00" y="198.27" class="m" font-size="7.1" fill="#232c3e" stroke="#232c3e" stroke-width="0" textLength="29.60" lengthAdjust="spacingAndGlyphs" xml:space="preserve">QoS Data</text>
<text x="750.00" y="198.27" class="m" font-size="7.1" fill="#232c3e" stroke="#232c3e" stroke-width="0" textLength="37.00" lengthAdjust="spacingAndGlyphs" xml:space="preserve">Data frame</text>
<text x="21.90" y="207.21" class="m" font-size="7.1" fill="#232c3e" stroke="#232c3e" stroke-width="0" textLength="18.50" lengthAdjust="spacingAndGlyphs" xml:space="preserve">33942</text>
<text x="65.60" y="207.21" class="m" font-size="7.1" fill="#232c3e" stroke="#232c3e" stroke-width="0" textLength="51.80" lengthAdjust="spacingAndGlyphs" xml:space="preserve">Cisco_0a:f1:0f</text>
<text x="140.50" y="207.21" class="m" font-size="7.1" fill="#232c3e" stroke="#232c3e" stroke-width="0" textLength="62.90" lengthAdjust="spacingAndGlyphs" xml:space="preserve">42:c3:a8:f6:cf:78</text>
<text x="224.00" y="207.21" class="m" font-size="7.1" fill="#232c3e" stroke="#232c3e" stroke-width="0" textLength="51.80" lengthAdjust="spacingAndGlyphs" xml:space="preserve">Cisco_0a:f1:0f</text>
<text x="292.00" y="207.21" class="m" font-size="7.1" fill="#232c3e" stroke="#232c3e" stroke-width="0" textLength="11.10" lengthAdjust="spacingAndGlyphs" xml:space="preserve">TCP</text>
<text x="401.50" y="207.21" class="m" font-size="7.1" fill="#232c3e" stroke="#232c3e" stroke-width="0" textLength="11.10" lengthAdjust="spacingAndGlyphs" xml:space="preserve">100</text>
<text x="430.70" y="207.21" class="m" font-size="7.1" fill="#232c3e" stroke="#232c3e" stroke-width="0" textLength="25.90" lengthAdjust="spacingAndGlyphs" xml:space="preserve">-64 dBm</text>
<text x="508.20" y="207.21" class="m" font-size="7.1" fill="#232c3e" stroke="#232c3e" stroke-width="0" textLength="48.10" lengthAdjust="spacingAndGlyphs" xml:space="preserve">64262 (64262)</text>
<text x="643.75" y="207.21" class="m" font-size="7.1" fill="#232c3e" stroke="#232c3e" stroke-width="0" textLength="18.50" lengthAdjust="spacingAndGlyphs" xml:space="preserve">154.9</text>
<text x="672.00" y="207.21" class="m" font-size="7.1" fill="#232c3e" stroke="#232c3e" stroke-width="0" textLength="29.60" lengthAdjust="spacingAndGlyphs" xml:space="preserve">QoS Data</text>
<text x="750.00" y="207.21" class="m" font-size="7.1" fill="#232c3e" stroke="#232c3e" stroke-width="0" textLength="37.00" lengthAdjust="spacingAndGlyphs" xml:space="preserve">Data frame</text>
<text x="21.90" y="216.15" class="m" font-size="7.1" fill="#232c3e" stroke="#232c3e" stroke-width="0" textLength="18.50" lengthAdjust="spacingAndGlyphs" xml:space="preserve">33943</text>
<text x="65.60" y="216.15" class="m" font-size="7.1" fill="#232c3e" stroke="#232c3e" stroke-width="0" textLength="51.80" lengthAdjust="spacingAndGlyphs" xml:space="preserve">Cisco_0a:f1:0f</text>
<text x="140.50" y="216.15" class="m" font-size="7.1" fill="#232c3e" stroke="#232c3e" stroke-width="0" textLength="62.90" lengthAdjust="spacingAndGlyphs" xml:space="preserve">42:c3:a8:f6:cf:78</text>
<text x="224.00" y="216.15" class="m" font-size="7.1" fill="#232c3e" stroke="#232c3e" stroke-width="0" textLength="51.80" lengthAdjust="spacingAndGlyphs" xml:space="preserve">Cisco_0a:f1:0f</text>
<text x="292.00" y="216.15" class="m" font-size="7.1" fill="#232c3e" stroke="#232c3e" stroke-width="0" textLength="11.10" lengthAdjust="spacingAndGlyphs" xml:space="preserve">TCP</text>
<text x="401.50" y="216.15" class="m" font-size="7.1" fill="#232c3e" stroke="#232c3e" stroke-width="0" textLength="11.10" lengthAdjust="spacingAndGlyphs" xml:space="preserve">100</text>
<text x="430.70" y="216.15" class="m" font-size="7.1" fill="#232c3e" stroke="#232c3e" stroke-width="0" textLength="25.90" lengthAdjust="spacingAndGlyphs" xml:space="preserve">-64 dBm</text>
<text x="508.20" y="216.15" class="m" font-size="7.1" fill="#232c3e" stroke="#232c3e" stroke-width="0" textLength="48.10" lengthAdjust="spacingAndGlyphs" xml:space="preserve">64262 (64262)</text>
<text x="643.75" y="216.15" class="m" font-size="7.1" fill="#232c3e" stroke="#232c3e" stroke-width="0" textLength="18.50" lengthAdjust="spacingAndGlyphs" xml:space="preserve">154.9</text>
<text x="672.00" y="216.15" class="m" font-size="7.1" fill="#232c3e" stroke="#232c3e" stroke-width="0" textLength="29.60" lengthAdjust="spacingAndGlyphs" xml:space="preserve">QoS Data</text>
<text x="750.00" y="216.15" class="m" font-size="7.1" fill="#232c3e" stroke="#232c3e" stroke-width="0" textLength="37.00" lengthAdjust="spacingAndGlyphs" xml:space="preserve">Data frame</text>
<text x="21.90" y="225.09" class="m" font-size="7.1" fill="#232c3e" stroke="#232c3e" stroke-width="0" textLength="18.50" lengthAdjust="spacingAndGlyphs" xml:space="preserve">33944</text>
<text x="65.60" y="225.09" class="m" font-size="7.1" fill="#232c3e" stroke="#232c3e" stroke-width="0" textLength="51.80" lengthAdjust="spacingAndGlyphs" xml:space="preserve">Cisco_0a:f1:0f</text>
<text x="140.50" y="225.09" class="m" font-size="7.1" fill="#232c3e" stroke="#232c3e" stroke-width="0" textLength="62.90" lengthAdjust="spacingAndGlyphs" xml:space="preserve">42:c3:a8:f6:cf:78</text>
<text x="224.00" y="225.09" class="m" font-size="7.1" fill="#232c3e" stroke="#232c3e" stroke-width="0" textLength="51.80" lengthAdjust="spacingAndGlyphs" xml:space="preserve">Cisco_0a:f1:0f</text>
<text x="292.00" y="225.09" class="m" font-size="7.1" fill="#232c3e" stroke="#232c3e" stroke-width="0" textLength="11.10" lengthAdjust="spacingAndGlyphs" xml:space="preserve">TCP</text>
<text x="401.50" y="225.09" class="m" font-size="7.1" fill="#232c3e" stroke="#232c3e" stroke-width="0" textLength="11.10" lengthAdjust="spacingAndGlyphs" xml:space="preserve">100</text>
<text x="430.70" y="225.09" class="m" font-size="7.1" fill="#232c3e" stroke="#232c3e" stroke-width="0" textLength="25.90" lengthAdjust="spacingAndGlyphs" xml:space="preserve">-64 dBm</text>
<text x="508.20" y="225.09" class="m" font-size="7.1" fill="#232c3e" stroke="#232c3e" stroke-width="0" textLength="48.10" lengthAdjust="spacingAndGlyphs" xml:space="preserve">64262 (64262)</text>
<text x="643.75" y="225.09" class="m" font-size="7.1" fill="#232c3e" stroke="#232c3e" stroke-width="0" textLength="18.50" lengthAdjust="spacingAndGlyphs" xml:space="preserve">154.9</text>
<text x="672.00" y="225.09" class="m" font-size="7.1" fill="#232c3e" stroke="#232c3e" stroke-width="0" textLength="29.60" lengthAdjust="spacingAndGlyphs" xml:space="preserve">QoS Data</text>
<text x="750.00" y="225.09" class="m" font-size="7.1" fill="#232c3e" stroke="#232c3e" stroke-width="0" textLength="37.00" lengthAdjust="spacingAndGlyphs" xml:space="preserve">Data frame</text>
<text x="21.90" y="234.03" class="m" font-size="7.1" fill="#232c3e" stroke="#232c3e" stroke-width="0" textLength="18.50" lengthAdjust="spacingAndGlyphs" xml:space="preserve">33945</text>
<text x="65.60" y="234.03" class="m" font-size="7.1" fill="#232c3e" stroke="#232c3e" stroke-width="0" textLength="51.80" lengthAdjust="spacingAndGlyphs" xml:space="preserve">Cisco_0a:f1:0f</text>
<text x="140.50" y="234.03" class="m" font-size="7.1" fill="#232c3e" stroke="#232c3e" stroke-width="0" textLength="62.90" lengthAdjust="spacingAndGlyphs" xml:space="preserve">42:c3:a8:f6:cf:78</text>
<text x="224.00" y="234.03" class="m" font-size="7.1" fill="#232c3e" stroke="#232c3e" stroke-width="0" textLength="51.80" lengthAdjust="spacingAndGlyphs" xml:space="preserve">Cisco_0a:f1:0f</text>
<text x="292.00" y="234.03" class="m" font-size="7.1" fill="#232c3e" stroke="#232c3e" stroke-width="0" textLength="11.10" lengthAdjust="spacingAndGlyphs" xml:space="preserve">TCP</text>
<text x="401.50" y="234.03" class="m" font-size="7.1" fill="#232c3e" stroke="#232c3e" stroke-width="0" textLength="11.10" lengthAdjust="spacingAndGlyphs" xml:space="preserve">100</text>
<text x="430.70" y="234.03" class="m" font-size="7.1" fill="#232c3e" stroke="#232c3e" stroke-width="0" textLength="25.90" lengthAdjust="spacingAndGlyphs" xml:space="preserve">-64 dBm</text>
<text x="508.20" y="234.03" class="m" font-size="7.1" fill="#232c3e" stroke="#232c3e" stroke-width="0" textLength="48.10" lengthAdjust="spacingAndGlyphs" xml:space="preserve">64262 (64262)</text>
<text x="643.75" y="234.03" class="m" font-size="7.1" fill="#232c3e" stroke="#232c3e" stroke-width="0" textLength="18.50" lengthAdjust="spacingAndGlyphs" xml:space="preserve">154.9</text>
<text x="672.00" y="234.03" class="m" font-size="7.1" fill="#232c3e" stroke="#232c3e" stroke-width="0" textLength="29.60" lengthAdjust="spacingAndGlyphs" xml:space="preserve">QoS Data</text>
<text x="750.00" y="234.03" class="m" font-size="7.1" fill="#232c3e" stroke="#232c3e" stroke-width="0" textLength="37.00" lengthAdjust="spacingAndGlyphs" xml:space="preserve">Data frame</text>
<text x="21.90" y="242.97" class="m" font-size="7.1" fill="#232c3e" stroke="#232c3e" stroke-width="0" textLength="18.50" lengthAdjust="spacingAndGlyphs" xml:space="preserve">33946</text>
<text x="65.60" y="242.97" class="m" font-size="7.1" fill="#232c3e" stroke="#232c3e" stroke-width="0" textLength="51.80" lengthAdjust="spacingAndGlyphs" xml:space="preserve">Cisco_0a:f1:0f</text>
<text x="140.50" y="242.97" class="m" font-size="7.1" fill="#232c3e" stroke="#232c3e" stroke-width="0" textLength="62.90" lengthAdjust="spacingAndGlyphs" xml:space="preserve">42:c3:a8:f6:cf:78</text>
<text x="224.00" y="242.97" class="m" font-size="7.1" fill="#232c3e" stroke="#232c3e" stroke-width="0" textLength="51.80" lengthAdjust="spacingAndGlyphs" xml:space="preserve">Cisco_0a:f1:0f</text>
<text x="292.00" y="242.97" class="m" font-size="7.1" fill="#232c3e" stroke="#232c3e" stroke-width="0" textLength="11.10" lengthAdjust="spacingAndGlyphs" xml:space="preserve">TCP</text>
<text x="401.50" y="242.97" class="m" font-size="7.1" fill="#232c3e" stroke="#232c3e" stroke-width="0" textLength="11.10" lengthAdjust="spacingAndGlyphs" xml:space="preserve">100</text>
<text x="430.70" y="242.97" class="m" font-size="7.1" fill="#232c3e" stroke="#232c3e" stroke-width="0" textLength="25.90" lengthAdjust="spacingAndGlyphs" xml:space="preserve">-64 dBm</text>
<text x="508.20" y="242.97" class="m" font-size="7.1" fill="#232c3e" stroke="#232c3e" stroke-width="0" textLength="48.10" lengthAdjust="spacingAndGlyphs" xml:space="preserve">64262 (64262)</text>
<text x="643.75" y="242.97" class="m" font-size="7.1" fill="#232c3e" stroke="#232c3e" stroke-width="0" textLength="18.50" lengthAdjust="spacingAndGlyphs" xml:space="preserve">154.9</text>
<text x="672.00" y="242.97" class="m" font-size="7.1" fill="#232c3e" stroke="#232c3e" stroke-width="0" textLength="29.60" lengthAdjust="spacingAndGlyphs" xml:space="preserve">QoS Data</text>
<text x="750.00" y="242.97" class="m" font-size="7.1" fill="#232c3e" stroke="#232c3e" stroke-width="0" textLength="37.00" lengthAdjust="spacingAndGlyphs" xml:space="preserve">Data frame</text>
<text x="21.90" y="251.91" class="m" font-size="7.1" fill="#232c3e" stroke="#232c3e" stroke-width="0" textLength="18.50" lengthAdjust="spacingAndGlyphs" xml:space="preserve">33947</text>
<text x="65.60" y="251.91" class="m" font-size="7.1" fill="#232c3e" stroke="#232c3e" stroke-width="0" textLength="51.80" lengthAdjust="spacingAndGlyphs" xml:space="preserve">Cisco_0a:f1:0f</text>
<text x="140.50" y="251.91" class="m" font-size="7.1" fill="#232c3e" stroke="#232c3e" stroke-width="0" textLength="62.90" lengthAdjust="spacingAndGlyphs" xml:space="preserve">42:c3:a8:f6:cf:78</text>
<text x="224.00" y="251.91" class="m" font-size="7.1" fill="#232c3e" stroke="#232c3e" stroke-width="0" textLength="51.80" lengthAdjust="spacingAndGlyphs" xml:space="preserve">Cisco_0a:f1:0f</text>
<text x="292.00" y="251.91" class="m" font-size="7.1" fill="#232c3e" stroke="#232c3e" stroke-width="0" textLength="11.10" lengthAdjust="spacingAndGlyphs" xml:space="preserve">TCP</text>
<text x="401.50" y="251.91" class="m" font-size="7.1" fill="#232c3e" stroke="#232c3e" stroke-width="0" textLength="11.10" lengthAdjust="spacingAndGlyphs" xml:space="preserve">100</text>
<text x="430.70" y="251.91" class="m" font-size="7.1" fill="#232c3e" stroke="#232c3e" stroke-width="0" textLength="25.90" lengthAdjust="spacingAndGlyphs" xml:space="preserve">-64 dBm</text>
<text x="508.20" y="251.91" class="m" font-size="7.1" fill="#232c3e" stroke="#232c3e" stroke-width="0" textLength="48.10" lengthAdjust="spacingAndGlyphs" xml:space="preserve">64262 (64262)</text>
<text x="643.75" y="251.91" class="m" font-size="7.1" fill="#232c3e" stroke="#232c3e" stroke-width="0" textLength="18.50" lengthAdjust="spacingAndGlyphs" xml:space="preserve">154.9</text>
<text x="672.00" y="251.91" class="m" font-size="7.1" fill="#232c3e" stroke="#232c3e" stroke-width="0" textLength="29.60" lengthAdjust="spacingAndGlyphs" xml:space="preserve">QoS Data</text>
<text x="750.00" y="251.91" class="m" font-size="7.1" fill="#232c3e" stroke="#232c3e" stroke-width="0" textLength="37.00" lengthAdjust="spacingAndGlyphs" xml:space="preserve">Data frame</text>
<text x="21.90" y="260.85" class="m" font-size="7.1" fill="#232c3e" stroke="#232c3e" stroke-width="0" textLength="18.50" lengthAdjust="spacingAndGlyphs" xml:space="preserve">33948</text>
<text x="65.60" y="260.85" class="m" font-size="7.1" fill="#232c3e" stroke="#232c3e" stroke-width="0" textLength="51.80" lengthAdjust="spacingAndGlyphs" xml:space="preserve">Cisco_0a:f1:0f</text>
<text x="140.50" y="260.85" class="m" font-size="7.1" fill="#232c3e" stroke="#232c3e" stroke-width="0" textLength="62.90" lengthAdjust="spacingAndGlyphs" xml:space="preserve">42:c3:a8:f6:cf:78</text>
<text x="224.00" y="260.85" class="m" font-size="7.1" fill="#232c3e" stroke="#232c3e" stroke-width="0" textLength="51.80" lengthAdjust="spacingAndGlyphs" xml:space="preserve">Cisco_0a:f1:0f</text>
<text x="292.00" y="260.85" class="m" font-size="7.1" fill="#232c3e" stroke="#232c3e" stroke-width="0" textLength="11.10" lengthAdjust="spacingAndGlyphs" xml:space="preserve">TCP</text>
<text x="401.50" y="260.85" class="m" font-size="7.1" fill="#232c3e" stroke="#232c3e" stroke-width="0" textLength="11.10" lengthAdjust="spacingAndGlyphs" xml:space="preserve">100</text>
<text x="430.70" y="260.85" class="m" font-size="7.1" fill="#232c3e" stroke="#232c3e" stroke-width="0" textLength="25.90" lengthAdjust="spacingAndGlyphs" xml:space="preserve">-64 dBm</text>
<text x="508.20" y="260.85" class="m" font-size="7.1" fill="#232c3e" stroke="#232c3e" stroke-width="0" textLength="48.10" lengthAdjust="spacingAndGlyphs" xml:space="preserve">64262 (64262)</text>
<text x="643.75" y="260.85" class="m" font-size="7.1" fill="#232c3e" stroke="#232c3e" stroke-width="0" textLength="18.50" lengthAdjust="spacingAndGlyphs" xml:space="preserve">154.9</text>
<text x="672.00" y="260.85" class="m" font-size="7.1" fill="#232c3e" stroke="#232c3e" stroke-width="0" textLength="29.60" lengthAdjust="spacingAndGlyphs" xml:space="preserve">QoS Data</text>
<text x="750.00" y="260.85" class="m" font-size="7.1" fill="#232c3e" stroke="#232c3e" stroke-width="0" textLength="37.00" lengthAdjust="spacingAndGlyphs" xml:space="preserve">Data frame</text>
<text x="21.90" y="269.79" class="m" font-size="7.1" fill="#232c3e" stroke="#232c3e" stroke-width="0" textLength="18.50" lengthAdjust="spacingAndGlyphs" xml:space="preserve">33949</text>
<text x="65.60" y="269.79" class="m" font-size="7.1" fill="#232c3e" stroke="#232c3e" stroke-width="0" textLength="51.80" lengthAdjust="spacingAndGlyphs" xml:space="preserve">Cisco_0a:f1:0f</text>
<text x="140.50" y="269.79" class="m" font-size="7.1" fill="#232c3e" stroke="#232c3e" stroke-width="0" textLength="62.90" lengthAdjust="spacingAndGlyphs" xml:space="preserve">42:c3:a8:f6:cf:78</text>
<text x="224.00" y="269.79" class="m" font-size="7.1" fill="#232c3e" stroke="#232c3e" stroke-width="0" textLength="51.80" lengthAdjust="spacingAndGlyphs" xml:space="preserve">Cisco_0a:f1:0f</text>
<text x="292.00" y="269.79" class="m" font-size="7.1" fill="#232c3e" stroke="#232c3e" stroke-width="0" textLength="11.10" lengthAdjust="spacingAndGlyphs" xml:space="preserve">TCP</text>
<text x="401.50" y="269.79" class="m" font-size="7.1" fill="#232c3e" stroke="#232c3e" stroke-width="0" textLength="11.10" lengthAdjust="spacingAndGlyphs" xml:space="preserve">100</text>
<text x="430.70" y="269.79" class="m" font-size="7.1" fill="#232c3e" stroke="#232c3e" stroke-width="0" textLength="25.90" lengthAdjust="spacingAndGlyphs" xml:space="preserve">-64 dBm</text>
<text x="508.20" y="269.79" class="m" font-size="7.1" fill="#232c3e" stroke="#232c3e" stroke-width="0" textLength="48.10" lengthAdjust="spacingAndGlyphs" xml:space="preserve">64262 (64262)</text>
<text x="643.75" y="269.79" class="m" font-size="7.1" fill="#232c3e" stroke="#232c3e" stroke-width="0" textLength="18.50" lengthAdjust="spacingAndGlyphs" xml:space="preserve">154.9</text>
<text x="672.00" y="269.79" class="m" font-size="7.1" fill="#232c3e" stroke="#232c3e" stroke-width="0" textLength="29.60" lengthAdjust="spacingAndGlyphs" xml:space="preserve">QoS Data</text>
<text x="750.00" y="269.79" class="m" font-size="7.1" fill="#232c3e" stroke="#232c3e" stroke-width="0" textLength="37.00" lengthAdjust="spacingAndGlyphs" xml:space="preserve">Data frame</text>
<text x="21.90" y="278.73" class="m" font-size="7.1" fill="#232c3e" stroke="#232c3e" stroke-width="0" textLength="18.50" lengthAdjust="spacingAndGlyphs" xml:space="preserve">33950</text>
<text x="65.60" y="278.73" class="m" font-size="7.1" fill="#232c3e" stroke="#232c3e" stroke-width="0" textLength="51.80" lengthAdjust="spacingAndGlyphs" xml:space="preserve">Cisco_0a:f1:0f</text>
<text x="140.50" y="278.73" class="m" font-size="7.1" fill="#232c3e" stroke="#232c3e" stroke-width="0" textLength="62.90" lengthAdjust="spacingAndGlyphs" xml:space="preserve">42:c3:a8:f6:cf:78</text>
<text x="224.00" y="278.73" class="m" font-size="7.1" fill="#232c3e" stroke="#232c3e" stroke-width="0" textLength="51.80" lengthAdjust="spacingAndGlyphs" xml:space="preserve">Cisco_0a:f1:0f</text>
<text x="292.00" y="278.73" class="m" font-size="7.1" fill="#232c3e" stroke="#232c3e" stroke-width="0" textLength="11.10" lengthAdjust="spacingAndGlyphs" xml:space="preserve">TCP</text>
<text x="401.50" y="278.73" class="m" font-size="7.1" fill="#232c3e" stroke="#232c3e" stroke-width="0" textLength="11.10" lengthAdjust="spacingAndGlyphs" xml:space="preserve">100</text>
<text x="430.70" y="278.73" class="m" font-size="7.1" fill="#232c3e" stroke="#232c3e" stroke-width="0" textLength="25.90" lengthAdjust="spacingAndGlyphs" xml:space="preserve">-64 dBm</text>
<text x="508.20" y="278.73" class="m" font-size="7.1" fill="#232c3e" stroke="#232c3e" stroke-width="0" textLength="48.10" lengthAdjust="spacingAndGlyphs" xml:space="preserve">64262 (64262)</text>
<text x="643.75" y="278.73" class="m" font-size="7.1" fill="#232c3e" stroke="#232c3e" stroke-width="0" textLength="18.50" lengthAdjust="spacingAndGlyphs" xml:space="preserve">154.9</text>
<text x="672.00" y="278.73" class="m" font-size="7.1" fill="#232c3e" stroke="#232c3e" stroke-width="0" textLength="29.60" lengthAdjust="spacingAndGlyphs" xml:space="preserve">QoS Data</text>
<text x="750.00" y="278.73" class="m" font-size="7.1" fill="#232c3e" stroke="#232c3e" stroke-width="0" textLength="37.00" lengthAdjust="spacingAndGlyphs" xml:space="preserve">Data frame</text>
<text x="21.90" y="287.67" class="m" font-size="7.1" fill="#232c3e" stroke="#232c3e" stroke-width="0" textLength="18.50" lengthAdjust="spacingAndGlyphs" xml:space="preserve">33951</text>
<text x="65.60" y="287.67" class="m" font-size="7.1" fill="#232c3e" stroke="#232c3e" stroke-width="0" textLength="51.80" lengthAdjust="spacingAndGlyphs" xml:space="preserve">Cisco_0a:f1:0f</text>
<text x="140.50" y="287.67" class="m" font-size="7.1" fill="#232c3e" stroke="#232c3e" stroke-width="0" textLength="62.90" lengthAdjust="spacingAndGlyphs" xml:space="preserve">42:c3:a8:f6:cf:78</text>
<text x="224.00" y="287.67" class="m" font-size="7.1" fill="#232c3e" stroke="#232c3e" stroke-width="0" textLength="51.80" lengthAdjust="spacingAndGlyphs" xml:space="preserve">Cisco_0a:f1:0f</text>
<text x="292.00" y="287.67" class="m" font-size="7.1" fill="#232c3e" stroke="#232c3e" stroke-width="0" textLength="11.10" lengthAdjust="spacingAndGlyphs" xml:space="preserve">TCP</text>
<text x="401.50" y="287.67" class="m" font-size="7.1" fill="#232c3e" stroke="#232c3e" stroke-width="0" textLength="11.10" lengthAdjust="spacingAndGlyphs" xml:space="preserve">100</text>
<text x="430.70" y="287.67" class="m" font-size="7.1" fill="#232c3e" stroke="#232c3e" stroke-width="0" textLength="25.90" lengthAdjust="spacingAndGlyphs" xml:space="preserve">-64 dBm</text>
<text x="508.20" y="287.67" class="m" font-size="7.1" fill="#232c3e" stroke="#232c3e" stroke-width="0" textLength="48.10" lengthAdjust="spacingAndGlyphs" xml:space="preserve">64262 (64262)</text>
<text x="643.75" y="287.67" class="m" font-size="7.1" fill="#232c3e" stroke="#232c3e" stroke-width="0" textLength="18.50" lengthAdjust="spacingAndGlyphs" xml:space="preserve">154.9</text>
<text x="672.00" y="287.67" class="m" font-size="7.1" fill="#232c3e" stroke="#232c3e" stroke-width="0" textLength="29.60" lengthAdjust="spacingAndGlyphs" xml:space="preserve">QoS Data</text>
<text x="750.00" y="287.67" class="m" font-size="7.1" fill="#232c3e" stroke="#232c3e" stroke-width="0" textLength="37.00" lengthAdjust="spacingAndGlyphs" xml:space="preserve">Data frame</text>
<text x="21.90" y="296.61" class="m" font-size="7.1" fill="#232c3e" stroke="#232c3e" stroke-width="0" textLength="18.50" lengthAdjust="spacingAndGlyphs" xml:space="preserve">33952</text>
<text x="65.60" y="296.61" class="m" font-size="7.1" fill="#232c3e" stroke="#232c3e" stroke-width="0" textLength="51.80" lengthAdjust="spacingAndGlyphs" xml:space="preserve">Cisco_0a:f1:0f</text>
<text x="140.50" y="296.61" class="m" font-size="7.1" fill="#232c3e" stroke="#232c3e" stroke-width="0" textLength="62.90" lengthAdjust="spacingAndGlyphs" xml:space="preserve">42:c3:a8:f6:cf:78</text>
<text x="224.00" y="296.61" class="m" font-size="7.1" fill="#232c3e" stroke="#232c3e" stroke-width="0" textLength="51.80" lengthAdjust="spacingAndGlyphs" xml:space="preserve">Cisco_0a:f1:0f</text>
<text x="292.00" y="296.61" class="m" font-size="7.1" fill="#232c3e" stroke="#232c3e" stroke-width="0" textLength="11.10" lengthAdjust="spacingAndGlyphs" xml:space="preserve">TCP</text>
<text x="401.50" y="296.61" class="m" font-size="7.1" fill="#232c3e" stroke="#232c3e" stroke-width="0" textLength="11.10" lengthAdjust="spacingAndGlyphs" xml:space="preserve">100</text>
<text x="430.70" y="296.61" class="m" font-size="7.1" fill="#232c3e" stroke="#232c3e" stroke-width="0" textLength="25.90" lengthAdjust="spacingAndGlyphs" xml:space="preserve">-64 dBm</text>
<text x="508.20" y="296.61" class="m" font-size="7.1" fill="#232c3e" stroke="#232c3e" stroke-width="0" textLength="48.10" lengthAdjust="spacingAndGlyphs" xml:space="preserve">64262 (64262)</text>
<text x="643.75" y="296.61" class="m" font-size="7.1" fill="#232c3e" stroke="#232c3e" stroke-width="0" textLength="18.50" lengthAdjust="spacingAndGlyphs" xml:space="preserve">154.9</text>
<text x="672.00" y="296.61" class="m" font-size="7.1" fill="#232c3e" stroke="#232c3e" stroke-width="0" textLength="29.60" lengthAdjust="spacingAndGlyphs" xml:space="preserve">QoS Data</text>
<text x="750.00" y="296.61" class="m" font-size="7.1" fill="#232c3e" stroke="#232c3e" stroke-width="0" textLength="37.00" lengthAdjust="spacingAndGlyphs" xml:space="preserve">Data frame</text>
<text x="21.90" y="305.55" class="m" font-size="7.1" fill="#232c3e" stroke="#232c3e" stroke-width="0" textLength="18.50" lengthAdjust="spacingAndGlyphs" xml:space="preserve">33953</text>
<text x="65.60" y="305.55" class="m" font-size="7.1" fill="#232c3e" stroke="#232c3e" stroke-width="0" textLength="51.80" lengthAdjust="spacingAndGlyphs" xml:space="preserve">Cisco_0a:f1:0f</text>
<text x="140.50" y="305.55" class="m" font-size="7.1" fill="#232c3e" stroke="#232c3e" stroke-width="0" textLength="62.90" lengthAdjust="spacingAndGlyphs" xml:space="preserve">42:c3:a8:f6:cf:78</text>
<text x="224.00" y="305.55" class="m" font-size="7.1" fill="#232c3e" stroke="#232c3e" stroke-width="0" textLength="51.80" lengthAdjust="spacingAndGlyphs" xml:space="preserve">Cisco_0a:f1:0f</text>
<text x="292.00" y="305.55" class="m" font-size="7.1" fill="#232c3e" stroke="#232c3e" stroke-width="0" textLength="11.10" lengthAdjust="spacingAndGlyphs" xml:space="preserve">TCP</text>
<text x="401.50" y="305.55" class="m" font-size="7.1" fill="#232c3e" stroke="#232c3e" stroke-width="0" textLength="11.10" lengthAdjust="spacingAndGlyphs" xml:space="preserve">100</text>
<text x="430.70" y="305.55" class="m" font-size="7.1" fill="#232c3e" stroke="#232c3e" stroke-width="0" textLength="25.90" lengthAdjust="spacingAndGlyphs" xml:space="preserve">-64 dBm</text>
<text x="508.20" y="305.55" class="m" font-size="7.1" fill="#232c3e" stroke="#232c3e" stroke-width="0" textLength="48.10" lengthAdjust="spacingAndGlyphs" xml:space="preserve">64262 (64262)</text>
<text x="643.75" y="305.55" class="m" font-size="7.1" fill="#232c3e" stroke="#232c3e" stroke-width="0" textLength="18.50" lengthAdjust="spacingAndGlyphs" xml:space="preserve">154.9</text>
<text x="672.00" y="305.55" class="m" font-size="7.1" fill="#232c3e" stroke="#232c3e" stroke-width="0" textLength="29.60" lengthAdjust="spacingAndGlyphs" xml:space="preserve">QoS Data</text>
<text x="750.00" y="305.55" class="m" font-size="7.1" fill="#232c3e" stroke="#232c3e" stroke-width="0" textLength="37.00" lengthAdjust="spacingAndGlyphs" xml:space="preserve">Data frame</text>
<line x1="11.30" y1="30.80" x2="11.30" y2="301.00" stroke="#8a8a9a" stroke-width="0.7"/>
<line x1="11.30" y1="48.30" x2="11.30" y2="119.80" stroke="#f2c4c0" stroke-width="0.7"/>
</g>
<rect x="987.20" y="17.40" width="17.50" height="283.60" fill="#e7e6fd" stroke="#c5c3d6" stroke-width="0.6"/>
<rect x="987.50" y="81.50" width="17.00" height="3.20" fill="#34404e"/>
<rect x="987.50" y="86.80" width="17.00" height="2.60" fill="#34404e"/>
<rect x="987.50" y="89.40" width="17.00" height="17.40" fill="#d92d21"/>
<rect x="987.50" y="118.00" width="17.00" height="1.40" fill="#4c5870"/>
<rect x="987.50" y="119.40" width="17.00" height="3.30" fill="#d92d21"/>
<rect x="987.50" y="185.20" width="17.00" height="1.00" fill="#e05a50"/>
<rect x="987.50" y="200.70" width="17.00" height="1.00" fill="#e88a84"/>
<rect x="987.50" y="211.60" width="17.00" height="1.00" fill="#e05a50"/>
<rect x="987.50" y="219.90" width="17.00" height="6.70" fill="#d92d21"/>
<rect x="987.50" y="268.50" width="17.00" height="6.40" fill="#d92d21"/>
<rect x="1009.20" y="121.00" width="1.40" height="10.00" fill="#a8a8a8"/>
<rect x="16.00" y="305.00" width="835.00" height="2.00" fill="#a6a6a6"/>
<line x1="6.00" y1="310.20" x2="1013.50" y2="310.20" stroke="#a3a3a3" stroke-width="0.8"/>
<line x1="6.00" y1="313.40" x2="1013.50" y2="313.40" stroke="#a3a3a3" stroke-width="0.8"/>
<rect x="7.00" y="313.80" width="670.50" height="134.00" fill="#ffffff"/>
<line x1="6.60" y1="313.40" x2="6.60" y2="447.70" stroke="#a8a8b0" stroke-width="0.8"/>
<rect x="677.20" y="313.80" width="9.30" height="134.00" fill="#eeeeee"/>
<rect x="680.70" y="373.60" width="1.20" height="73.60" fill="#a0a0a0"/>
<line x1="686.30" y1="313.40" x2="686.30" y2="447.60" stroke="#a8a8a8" stroke-width="0.9"/>
<line x1="689.50" y1="313.40" x2="689.50" y2="447.60" stroke="#a8a8a8" stroke-width="0.9"/>
<rect x="38.00" y="323.00" width="639.00" height="8.20" fill="#dcdcdc"/>
<clipPath id="dc"><rect x="7" y="313.8" width="670.3" height="134"/></clipPath>
<g clip-path="url(#dc)">
<text x="29.00" y="320.90" class="m" font-size="7.3" fill="#222230" stroke="#222230" stroke-width="0" textLength="51.52" lengthAdjust="spacingAndGlyphs" xml:space="preserve">HE information</text>
<path d="M20.50 317.10 L22.50 319.30 L24.50 317.10" fill="none" stroke="#333" stroke-width="1.0"/>
<text x="39.75" y="329.84" class="m" font-size="7.3" fill="#222230" stroke="#222230" stroke-width="0" textLength="706.56" lengthAdjust="spacingAndGlyphs" xml:space="preserve">HE Data 1: 0xc3fc, PPDU Format: HE_SU, BSS Color known, Beam Change known, UL/DL known, data MCS known, data DCM known, Coding known, LDPC extra symbol segment known, STBC known, Doppler known</text>
<path d="M31.80 325.24 L34.00 327.44 L31.80 329.64" fill="none" stroke="#666" stroke-width="0.7"/>
<text x="39.75" y="338.78" class="m" font-size="7.3" fill="#222230" stroke="#222230" stroke-width="0" textLength="555.68" lengthAdjust="spacingAndGlyphs" xml:space="preserve">HE Data 2: 0x00fe, GI known, LTF symbols known, Pre-FEC Padding Factor known, TxBF known, PE Disambiguity known, TXOP known, midamble periodicity known</text>
<path d="M31.80 334.18 L34.00 336.38 L31.80 338.58" fill="none" stroke="#666" stroke-width="0.7"/>
<text x="39.75" y="347.72" class="m" font-size="7.3" fill="#222230" stroke="#222230" stroke-width="0" textLength="114.08" lengthAdjust="spacingAndGlyphs" xml:space="preserve">HE Data 3: 0x2741, Coding: LDPC</text>
<path d="M31.20 343.92 L33.20 346.12 L35.20 343.92" fill="none" stroke="#333" stroke-width="1.0"/>
<text x="51.00" y="356.66" class="m" font-size="7.3" fill="#222230" stroke="#222230" stroke-width="0" textLength="136.16" lengthAdjust="spacingAndGlyphs" xml:space="preserve">.... .... ..00 0001 = BSS Color: 0x01</text>
<text x="51.00" y="365.60" class="m" font-size="7.3" fill="#222230" stroke="#222230" stroke-width="0" textLength="139.84" lengthAdjust="spacingAndGlyphs" xml:space="preserve">.... .... .1.. .... = Beam Change: 0x1</text>
<text x="51.00" y="374.54" class="m" font-size="7.3" fill="#222230" stroke="#222230" stroke-width="0" textLength="117.76" lengthAdjust="spacingAndGlyphs" xml:space="preserve">.... .... 0... .... = UL/DL: 0x0</text>
<text x="51.00" y="383.48" class="m" font-size="7.3" fill="#222230" stroke="#222230" stroke-width="0" textLength="128.80" lengthAdjust="spacingAndGlyphs" xml:space="preserve">.... 0111 .... .... = data MCS: 0x7</text>
<text x="51.00" y="392.42" class="m" font-size="7.3" fill="#222230" stroke="#222230" stroke-width="0" textLength="128.80" lengthAdjust="spacingAndGlyphs" xml:space="preserve">...0 .... .... .... = data DCM: 0x0</text>
<text x="51.00" y="401.36" class="m" font-size="7.3" fill="#222230" stroke="#222230" stroke-width="0" textLength="147.20" lengthAdjust="spacingAndGlyphs" xml:space="preserve">..1. .... .... .... = Coding: LDPC (0x1)</text>
<text x="51.00" y="410.30" class="m" font-size="7.3" fill="#222230" stroke="#222230" stroke-width="0" textLength="191.36" lengthAdjust="spacingAndGlyphs" xml:space="preserve">.0.. .... .... .... = LDPC extra symbol segment: 0x0</text>
<text x="51.00" y="419.24" class="m" font-size="7.3" fill="#222230" stroke="#222230" stroke-width="0" textLength="114.08" lengthAdjust="spacingAndGlyphs" xml:space="preserve">0... .... .... .... = STBC: 0x0</text>
<text x="39.75" y="428.18" class="m" font-size="7.3" fill="#222230" stroke="#222230" stroke-width="0" textLength="62.56" lengthAdjust="spacingAndGlyphs" xml:space="preserve">HE Data 4: 0x0000</text>
<path d="M31.80 423.58 L34.00 425.78 L31.80 427.98" fill="none" stroke="#666" stroke-width="0.7"/>
<text x="39.75" y="437.12" class="m" font-size="7.3" fill="#222230" stroke="#222230" stroke-width="0" textLength="368.00" lengthAdjust="spacingAndGlyphs" xml:space="preserve">HE Data 5: 0x1140, data Bandwidth/RU allocation: 20, GI: 0.8us, LTF symbol size: 1x, LTF symbols: 2x</text>
<path d="M31.80 432.52 L34.00 434.72 L31.80 436.92" fill="none" stroke="#666" stroke-width="0.7"/>
<text x="39.75" y="446.06" class="m" font-size="7.3" fill="#222230" stroke="#222230" stroke-width="0" textLength="261.28" lengthAdjust="spacingAndGlyphs" xml:space="preserve">HE Data 6: 0x7f02, NSTS: 2 space-time streams, midamble periodicity: 10</text>
<path d="M31.80 441.46 L34.00 443.66 L31.80 445.86" fill="none" stroke="#666" stroke-width="0.7"/>
</g>
<rect x="689.60" y="313.80" width="316.40" height="133.70" fill="#ffffff"/>
<rect x="1006.00" y="313.80" width="7.50" height="133.70" fill="#eeeeee"/>
<rect x="1009.10" y="323.00" width="1.30" height="40.00" fill="#a0a0a0"/>
<text x="705.90" y="320.90" class="s" font-size="6.67" fill="#2a2530" textLength="113.4" lengthAdjust="spacingAndGlyphs">IEEE 802.11 Radiotap Capture header</text>
<defs><pattern id="hatch" patternUnits="userSpaceOnUse" width="3.05" height="3.05" patternTransform="rotate(45)"><rect width="3.05" height="3.05" fill="#fff"/><line x1="1.5" y1="0" x2="1.5" y2="3.05" stroke="#585858" stroke-width="0.8"/></pattern></defs>
<clipPath id="bc"><rect x="689.6" y="313.8" width="316.4" height="133.7"/></clipPath>
<g clip-path="url(#bc)">
<rect x="780.98" y="385.60" width="71.48" height="17.40" fill="url(#hatch)"/>
<rect x="923.92" y="403.00" width="71.48" height="17.25" fill="url(#hatch)"/>
<rect x="709.50" y="420.25" width="53.61" height="17.15" fill="url(#hatch)"/>
<rect x="772.04" y="420.25" width="223.36" height="34.35" fill="url(#hatch)"/>
<rect x="709.50" y="437.40" width="62.54" height="17.20" fill="url(#hatch)"/>
<line x1="709.50" y1="324.70" x2="709.50" y2="333.60" stroke="#333" stroke-width="0.9"/>
<line x1="718.43" y1="329.00" x2="718.43" y2="333.60" stroke="#444" stroke-width="0.8"/>
<line x1="727.37" y1="329.00" x2="727.37" y2="333.60" stroke="#444" stroke-width="0.8"/>
<line x1="736.30" y1="329.00" x2="736.30" y2="333.60" stroke="#444" stroke-width="0.8"/>
<line x1="745.24" y1="329.00" x2="745.24" y2="333.60" stroke="#444" stroke-width="0.8"/>
<line x1="754.17" y1="329.00" x2="754.17" y2="333.60" stroke="#444" stroke-width="0.8"/>
<line x1="763.11" y1="329.00" x2="763.11" y2="333.60" stroke="#444" stroke-width="0.8"/>
<line x1="772.04" y1="329.00" x2="772.04" y2="333.60" stroke="#444" stroke-width="0.8"/>
<line x1="780.98" y1="324.70" x2="780.98" y2="333.60" stroke="#333" stroke-width="0.9"/>
<line x1="789.91" y1="329.00" x2="789.91" y2="333.60" stroke="#444" stroke-width="0.8"/>
<line x1="798.84" y1="329.00" x2="798.84" y2="333.60" stroke="#444" stroke-width="0.8"/>
<line x1="807.78" y1="329.00" x2="807.78" y2="333.60" stroke="#444" stroke-width="0.8"/>
<line x1="816.71" y1="329.00" x2="816.71" y2="333.60" stroke="#444" stroke-width="0.8"/>
<line x1="825.65" y1="329.00" x2="825.65" y2="333.60" stroke="#444" stroke-width="0.8"/>
<line x1="834.58" y1="329.00" x2="834.58" y2="333.60" stroke="#444" stroke-width="0.8"/>
<line x1="843.52" y1="329.00" x2="843.52" y2="333.60" stroke="#444" stroke-width="0.8"/>
<line x1="852.45" y1="324.70" x2="852.45" y2="333.60" stroke="#333" stroke-width="0.9"/>
<line x1="861.38" y1="329.00" x2="861.38" y2="333.60" stroke="#444" stroke-width="0.8"/>
<line x1="870.32" y1="329.00" x2="870.32" y2="333.60" stroke="#444" stroke-width="0.8"/>
<line x1="879.25" y1="329.00" x2="879.25" y2="333.60" stroke="#444" stroke-width="0.8"/>
<line x1="888.19" y1="329.00" x2="888.19" y2="333.60" stroke="#444" stroke-width="0.8"/>
<line x1="897.12" y1="329.00" x2="897.12" y2="333.60" stroke="#444" stroke-width="0.8"/>
<line x1="906.06" y1="329.00" x2="906.06" y2="333.60" stroke="#444" stroke-width="0.8"/>
<line x1="914.99" y1="329.00" x2="914.99" y2="333.60" stroke="#444" stroke-width="0.8"/>
<line x1="923.92" y1="324.70" x2="923.92" y2="333.60" stroke="#333" stroke-width="0.9"/>
<line x1="932.86" y1="329.00" x2="932.86" y2="333.60" stroke="#444" stroke-width="0.8"/>
<line x1="941.79" y1="329.00" x2="941.79" y2="333.60" stroke="#444" stroke-width="0.8"/>
<line x1="950.73" y1="329.00" x2="950.73" y2="333.60" stroke="#444" stroke-width="0.8"/>
<line x1="959.66" y1="329.00" x2="959.66" y2="333.60" stroke="#444" stroke-width="0.8"/>
<line x1="968.60" y1="329.00" x2="968.60" y2="333.60" stroke="#444" stroke-width="0.8"/>
<line x1="977.53" y1="329.00" x2="977.53" y2="333.60" stroke="#444" stroke-width="0.8"/>
<line x1="986.47" y1="329.00" x2="986.47" y2="333.60" stroke="#444" stroke-width="0.8"/>
<line x1="995.40" y1="324.70" x2="995.40" y2="333.60" stroke="#333" stroke-width="0.9"/>
<line x1="709.50" y1="333.40" x2="995.40" y2="333.40" stroke="#444" stroke-width="0.9"/>
<text x="710.30" y="330.00" class="s" font-size="5.0" fill="#3a3540" textLength="2.8" lengthAdjust="spacingAndGlyphs">0</text>
<text x="846.00" y="330.00" class="s" font-size="5.0" fill="#3a3540" textLength="5.2" lengthAdjust="spacingAndGlyphs">15</text>
<text x="853.40" y="330.00" class="s" font-size="5.0" fill="#3a3540" textLength="5.0" lengthAdjust="spacingAndGlyphs">16</text>
<text x="988.40" y="330.00" class="s" font-size="5.0" fill="#3a3540" textLength="5.0" lengthAdjust="spacingAndGlyphs">31</text>
<line x1="709.50" y1="351.25" x2="995.40" y2="351.25" stroke="#666" stroke-width="0.9"/>
<line x1="709.50" y1="368.50" x2="995.40" y2="368.50" stroke="#666" stroke-width="0.9"/>
<line x1="709.50" y1="385.60" x2="995.40" y2="385.60" stroke="#666" stroke-width="0.9"/>
<line x1="709.50" y1="403.00" x2="995.40" y2="403.00" stroke="#666" stroke-width="0.9"/>
<line x1="709.50" y1="420.25" x2="995.40" y2="420.25" stroke="#666" stroke-width="0.9"/>
<line x1="709.50" y1="437.40" x2="772.04" y2="437.40" stroke="#555" stroke-width="0.9"/>
<line x1="709.50" y1="324.70" x2="709.50" y2="448.00" stroke="#444" stroke-width="0.9"/>
<line x1="995.40" y1="324.70" x2="995.40" y2="448.40" stroke="#555" stroke-width="0.9"/>
<line x1="780.98" y1="333.40" x2="780.98" y2="351.25" stroke="#333" stroke-width="0.9"/>
<line x1="852.45" y1="324.70" x2="852.45" y2="351.25" stroke="#333" stroke-width="0.9"/>
<line x1="780.98" y1="385.60" x2="780.98" y2="403.00" stroke="#333" stroke-width="0.9"/>
<line x1="852.45" y1="385.60" x2="852.45" y2="403.00" stroke="#333" stroke-width="0.9"/>
<line x1="852.45" y1="403.00" x2="852.45" y2="420.25" stroke="#333" stroke-width="0.9"/>
<line x1="923.92" y1="403.00" x2="923.92" y2="420.25" stroke="#333" stroke-width="0.9"/>
<rect x="763.11" y="420.25" width="8.93" height="17.15" fill="#ffffff" stroke="#444" stroke-width="0.8"/>
<line x1="763.11" y1="420.25" x2="763.11" y2="437.40" stroke="#444" stroke-width="0.9"/>
<text x="720.99" y="345.43" class="s" font-size="7.0" fill="#2a2530" textLength="48.5" lengthAdjust="spacingAndGlyphs">Header revision</text>
<text x="798.11" y="345.43" class="s" font-size="7.0" fill="#2a2530" textLength="37.2" lengthAdjust="spacingAndGlyphs">Header pad</text>
<text x="901.82" y="345.43" class="s" font-size="7.0" fill="#2a2530" textLength="44.2" lengthAdjust="spacingAndGlyphs">Header length</text>
<text x="828.05" y="380.15" class="s" font-size="7.0" fill="#2a2530" textLength="48.8" lengthAdjust="spacingAndGlyphs">MAC timestamp</text>
<text x="737.24" y="397.40" class="s" font-size="7.0" fill="#2a2530" textLength="16.0" lengthAdjust="spacingAndGlyphs">Flags</text>
<text x="895.92" y="397.40" class="s" font-size="7.0" fill="#2a2530" textLength="56.0" lengthAdjust="spacingAndGlyphs">Channel frequency</text>
<text x="760.48" y="414.73" class="s" font-size="7.0" fill="#2a2530" textLength="41.0" lengthAdjust="spacingAndGlyphs">Channel flags</text>
<text x="865.79" y="414.73" class="s" font-size="7.0" fill="#2a2530" textLength="44.8" lengthAdjust="spacingAndGlyphs">Antenna signal</text>
<path d="M706.30 359.48 L712.50 356.27 M706.30 362.27 L712.50 359.38" stroke="#444" stroke-width="0.8" fill="none"/>
<path d="M992.20 359.48 L998.40 356.27 M992.20 362.27 L998.40 359.38" stroke="#444" stroke-width="0.8" fill="none"/>
<path d="M706.30 376.65 L712.50 373.45 M706.30 379.45 L712.50 376.55" stroke="#444" stroke-width="0.8" fill="none"/>
<path d="M992.20 376.65 L998.40 373.45 M992.20 379.45 L998.40 376.55" stroke="#444" stroke-width="0.8" fill="none"/>
</g>
<rect x="41.6" y="364.8" width="203.9" height="23.6" fill="none" stroke="#e8312a" stroke-width="1.6"/>
<rect x="34.5" y="426.2" width="276.8" height="23.9" fill="none" stroke="#e8312a" stroke-width="1.6"/>
<line x1="245.50" y1="378.30" x2="480.53" y2="43.49" stroke="#111" stroke-width="0.8"/>
<path d="M483.40 39.40 L481.92 45.69 L477.99 42.93 Z" fill="#111"/>
<line x1="492.60" y1="349.80" x2="620.38" y2="59.78" stroke="#111" stroke-width="0.8"/>
<path d="M622.40 55.20 L622.18 61.66 L617.78 59.72 Z" fill="#111"/>
<line x1="566.30" y1="349.80" x2="634.42" y2="129.98" stroke="#111" stroke-width="0.8"/>
<path d="M635.90 125.20 L636.42 131.64 L631.83 130.22 Z" fill="#111"/>
<line x1="245.50" y1="378.20" x2="324.00" y2="378.20" stroke="#333" stroke-width="0.8"/>
<line x1="311.30" y1="439.70" x2="440.00" y2="439.70" stroke="#555" stroke-width="0.8"/>
<text x="327.90" y="383.80" class="s" font-size="11.6" fill="#e8312a" font-weight="bold" textLength="140.6" lengthAdjust="spacingAndGlyphs" stroke="#e8312a" stroke-width="0.35">HEX 0x7 &gt; Decimal = MCS 7</text>
<text x="456.10" y="360.60" class="s" font-size="11.6" fill="#e8312a" font-weight="bold" textLength="68.1" lengthAdjust="spacingAndGlyphs" stroke="#e8312a" stroke-width="0.35">Retry Frames</text>
<text x="555.60" y="360.60" class="s" font-size="11.6" fill="#e8312a" font-weight="bold" textLength="80.3" lengthAdjust="spacingAndGlyphs" stroke="#e8312a" stroke-width="0.35">Rate Downshift</text>
<text x="451.00" y="441.90" class="s" font-size="11.6" fill="#e8312a" font-weight="bold" textLength="90.5" lengthAdjust="spacingAndGlyphs" stroke="#e8312a" stroke-width="0.35">2 Spatial Streams</text>
</svg>
</body></html>
